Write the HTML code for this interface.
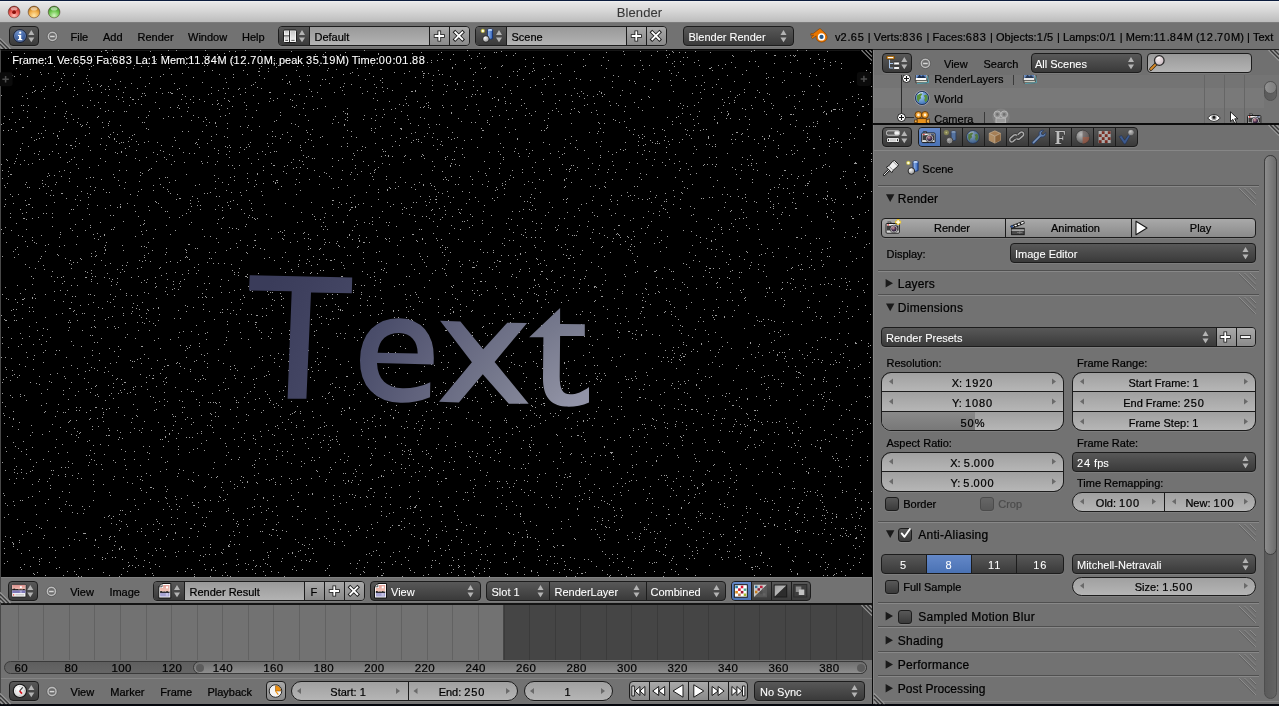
<!DOCTYPE html>
<html><head><meta charset="utf-8"><title>Blender</title>
<style>
html,body{margin:0;padding:0}
body{width:1279px;height:706px;position:relative;overflow:hidden;background:#727272;font-family:"Liberation Sans",sans-serif;font-size:11px;color:#000;-webkit-font-smoothing:antialiased}
.a{position:absolute}
.t{position:absolute;white-space:nowrap;line-height:14px;height:14px;-webkit-text-stroke:.22px}
.tw{color:#fff}
.w{position:absolute;box-sizing:border-box;border:1px solid #1c1c1c;border-radius:4px;overflow:hidden;box-shadow:0 1px 0 rgba(255,255,255,.09)}
.w>*{position:absolute}
.dk{background:linear-gradient(#585858,#3a3a3a)}
.bt{background:linear-gradient(#a9a9a9,#8a8a8a)}
.nm{background:linear-gradient(#a0a0a0,#b5b5b5);border-radius:10px}
.tx{background:linear-gradient(#999,#b3b3b3)}
.sel{background:linear-gradient(#6488c8,#4a72b4)}
.dv{top:0;bottom:0;width:1px;background:#1c1c1c}
svg{position:absolute;overflow:visible}
.d{letter-spacing:.9px}
#root{position:absolute;left:0;top:0;width:1279px;height:706px;will-change:transform}
.tw{-webkit-text-stroke:.08px}

</style></head>
<body>
<div id="root">
<div class="a" style="left:0px;top:0px;width:1279px;height:1px;background:#0b1c3d;"></div>
<div class="a" style="left:0px;top:1px;width:1279px;height:21px;background:linear-gradient(#f2f2f2,#e6e6e6 8%,#d6d6d6 48%,#bcbcbc);"></div>
<div class="a" style="left:0px;top:22px;width:1279px;height:1px;background:#7c7c7c;"></div>
<svg class="a" style="left:0px;top:0px" width="70" height="23" viewBox="0 0 70 23"><defs><radialGradient id="tlr" cx="50%" cy="80%" r="75%"><stop offset="0" stop-color="#ffc4bc"/><stop offset="0.55" stop-color="#ea5a52"/><stop offset="1" stop-color="#a02820"/></radialGradient><radialGradient id="tlo" cx="50%" cy="80%" r="75%"><stop offset="0" stop-color="#ffe6a8"/><stop offset="0.55" stop-color="#f0ac48"/><stop offset="1" stop-color="#a86a18"/></radialGradient><radialGradient id="tlg" cx="50%" cy="80%" r="75%"><stop offset="0" stop-color="#d4f6c0"/><stop offset="0.55" stop-color="#70c850"/><stop offset="1" stop-color="#3a8a24"/></radialGradient></defs><circle cx="14.1" cy="12" r="5.9" fill="url(#tlr)" stroke="rgba(60,30,20,.55)" stroke-width=".8"/><ellipse cx="14.1" cy="8.7" rx="3.3" ry="1.8" fill="rgba(255,255,255,.5)"/><circle cx="34" cy="12" r="5.9" fill="url(#tlo)" stroke="rgba(60,30,20,.55)" stroke-width=".8"/><ellipse cx="34" cy="8.7" rx="3.3" ry="1.8" fill="rgba(255,255,255,.5)"/><circle cx="54.1" cy="12" r="5.9" fill="url(#tlg)" stroke="rgba(60,30,20,.55)" stroke-width=".8"/><ellipse cx="54.1" cy="8.7" rx="3.3" ry="1.8" fill="rgba(255,255,255,.5)"/><circle cx="14.1" cy="12.2" r="1.9" fill="#8c0f0a"/></svg>
<div class="t " style="left:589.5px;top:4.5px;width:100px;text-align:center;font-size:13px;letter-spacing:.1px;color:#383838;line-height:16px;height:16px;-webkit-text-stroke:.1px">Blender</div><div class="a" style="left:0px;top:23px;width:1279px;height:26px;background:#727272;"></div>
<div class="a" style="left:0px;top:49px;width:1279px;height:1px;background:#1e1e1e;"></div>
<svg class="a" style="left:0px;top:37px" width="12" height="12" viewBox="0 0 12 12"><path d="M0 1.5L10.5 12M0 5.5L6.5 12M0 9.5L2.5 12" stroke="#9a9a9a" stroke-width="1.2"/><path d="M0 3.2L8.8 12M0 7.2L4.8 12" stroke="#3a3a3a" stroke-width="1.2"/></svg>
<div class="w dk" style="left:9px;top:26px;width:30px;height:20px;"></div><svg class="a" style="left:13px;top:29px" width="14" height="14" viewBox="0 0 14 14"><defs><radialGradient id="ig" cx="40%" cy="30%" r="75%"><stop offset="0" stop-color="#6f93cf"/><stop offset="1" stop-color="#1e3f80"/></radialGradient></defs><circle cx="7" cy="7" r="6.3" fill="url(#ig)" stroke="#101c38" stroke-width="1"/><circle cx="7" cy="7" r="5.6" fill="none" stroke="rgba(255,255,255,.35)" stroke-width=".6"/><rect x="6.1" y="2.6" width="2.2" height="2.1" rx=".9" fill="#fff"/><path d="M5 5.9H8.2V10H9.3V11.2H4.9V10H6V7.1H5Z" fill="#fff"/></svg><svg class="a" style="left:28px;top:30px" width="7" height="14" viewBox="0 0 7 14"><g transform="translate(0.3,0.1)"><path d="M3 0L6 4.8H0Z" fill="#b4b4b4"/><path d="M0 7.3H6L3 12.2Z" fill="#b4b4b4"/></g></svg>
<svg class="a" style="left:46px;top:30px" width="12" height="12" viewBox="0 0 12 12"><g transform="translate(0.9,0.9)"><circle cx="5.5" cy="5.5" r="4.1" fill="#6c6c6c" stroke="#bdbdbd" stroke-width="1.6"/><circle cx="5.5" cy="5.5" r="5.2" fill="none" stroke="rgba(50,50,50,.5)" stroke-width=".6"/><path d="M3.2 5.6H7.8" stroke="#d6d6d6" stroke-width="1.5"/></g></svg>
<div class="t " style="left:70.5px;top:30px;">File</div><div class="t " style="left:103px;top:30px;">Add</div><div class="t " style="left:137.5px;top:30px;">Render</div><div class="t " style="left:188px;top:30px;">Window</div><div class="t " style="left:242px;top:30px;">Help</div>
<div class="w " style="left:278px;top:26px;width:192px;height:20px;"><div class="dk" style="left:0;top:0;width:30px;height:18px"></div><div class="dv" style="left:30px"></div><div class="tx" style="left:31px;top:0;width:119px;height:18px"></div><div class="dv" style="left:150px"></div><div class="bt" style="left:151px;top:0;width:19px;height:18px"></div><div class="dv" style="left:170px"></div><div class="bt" style="left:171px;top:0;width:20px;height:18px"></div></div><svg class="a" style="left:283px;top:29px" width="15" height="15" viewBox="0 0 15 15"><g transform="translate(0,0.5)"><defs><linearGradient id="scg" x1="0" y1="0" x2="0" y2="1"><stop offset="0" stop-color="#c6c6c6"/><stop offset="1" stop-color="#f2f2f2"/></linearGradient></defs><rect x=".5" y=".5" width="13" height="12.5" rx="1.2" fill="#fff" stroke="#1c1c1c" stroke-width="1"/><rect x="1.6" y="1.6" width="4" height="4" fill="url(#scg)"/><rect x="1.6" y="7.3" width="4" height="4.6" fill="url(#scg)"/><rect x="7.4" y="1.6" width="5" height="10.3" fill="url(#scg)"/><path d="M6.5 .8V12.8M1 6.4H6.2" stroke="#2a2a2a" stroke-width="1"/><path d="M2.3 10.9H5M8.3 10.9H11.6" stroke="#333" stroke-width=".8"/></g></svg><svg class="a" style="left:299px;top:30px" width="7" height="14" viewBox="0 0 7 14"><g transform="translate(0,0.1)"><path d="M3 0L6 4.8H0Z" fill="#b4b4b4"/><path d="M0 7.3H6L3 12.2Z" fill="#b4b4b4"/></g></svg><div class="t " style="left:314.5px;top:30px;">Default</div><svg class="a" style="left:432px;top:29px" width="14" height="14" viewBox="0 0 14 14"><g transform="translate(0.8,0.5)"><path d="M6.5 1V12M1 6.5H12" stroke="#1a1a1a" stroke-width="3.6" stroke-linecap="butt"/><path d="M6.5 1.8V11.2M1.8 6.5H11.2" stroke="#fff" stroke-width="1.9"/></g></svg><svg class="a" style="left:452px;top:29px" width="14" height="14" viewBox="0 0 14 14"><g transform="translate(0.3,0.3)"><path d="M1.6 1.6L11.4 11.4M11.4 1.6L1.6 11.4" stroke="#1a1a1a" stroke-width="3.6"/><path d="M2.3 2.3L10.7 10.7M10.7 2.3L2.3 10.7" stroke="#fff" stroke-width="1.9"/></g></svg>
<div class="w " style="left:475px;top:26px;width:192px;height:20px;"><div class="dk" style="left:0;top:0;width:30px;height:18px"></div><div class="dv" style="left:30px"></div><div class="tx" style="left:31px;top:0;width:119px;height:18px"></div><div class="dv" style="left:150px"></div><div class="bt" style="left:151px;top:0;width:19px;height:18px"></div><div class="dv" style="left:170px"></div><div class="bt" style="left:171px;top:0;width:20px;height:18px"></div></div><svg class="a" style="left:480px;top:28px" width="15" height="15" viewBox="0 0 15 15"><defs><radialGradient id="sng" cx="35%" cy="30%" r="80%"><stop offset="0" stop-color="#fff"/><stop offset="1" stop-color="#8a8a8a"/></radialGradient><linearGradient id="cyg" x1="0" y1="0" x2="1" y2="0"><stop offset="0" stop-color="#9fc0f0"/><stop offset="1" stop-color="#2d5fb8"/></linearGradient><radialGradient id="lg" cx="50%" cy="50%" r="50%"><stop offset="0" stop-color="#fffde0"/><stop offset=".45" stop-color="#e8e06a"/><stop offset="1" stop-color="rgba(200,190,40,0)"/></radialGradient></defs><path d="M7.6 1.6Q10.2 .2 12.6 1.6V10.6Q10.2 12 7.6 10.6Z" fill="url(#cyg)" stroke="#14306e" stroke-width=".9"/><ellipse cx="10.1" cy="1.9" rx="2.3" ry=".9" fill="#c4daf8"/><circle cx="5.9" cy="11" r="3.3" fill="url(#sng)" stroke="#1e1e1e" stroke-width=".9"/><circle cx="2.8" cy="2.9" r="2.7" fill="url(#lg)"/><rect x="2" y="2.1" width="1.7" height="1.7" fill="#fffff0"/></svg><svg class="a" style="left:496px;top:30px" width="7" height="14" viewBox="0 0 7 14"><g transform="translate(0,0.1)"><path d="M3 0L6 4.8H0Z" fill="#b4b4b4"/><path d="M0 7.3H6L3 12.2Z" fill="#b4b4b4"/></g></svg><div class="t " style="left:511.5px;top:30px;">Scene</div><svg class="a" style="left:629px;top:29px" width="14" height="14" viewBox="0 0 14 14"><g transform="translate(0.8,0.5)"><path d="M6.5 1V12M1 6.5H12" stroke="#1a1a1a" stroke-width="3.6" stroke-linecap="butt"/><path d="M6.5 1.8V11.2M1.8 6.5H11.2" stroke="#fff" stroke-width="1.9"/></g></svg><svg class="a" style="left:649px;top:29px" width="14" height="14" viewBox="0 0 14 14"><g transform="translate(0.3,0.3)"><path d="M1.6 1.6L11.4 11.4M11.4 1.6L1.6 11.4" stroke="#1a1a1a" stroke-width="3.6"/><path d="M2.3 2.3L10.7 10.7M10.7 2.3L2.3 10.7" stroke="#fff" stroke-width="1.9"/></g></svg>
<div class="w dk" style="left:683px;top:26px;width:111px;height:20px;"></div><div class="t tw" style="left:688.5px;top:30.0px;">Blender Render</div><svg class="a" style="left:780px;top:30px" width="7" height="14" viewBox="0 0 7 14"><g transform="translate(0.5,0.1)"><path d="M3 0L6 4.8H0Z" fill="#b4b4b4"/><path d="M0 7.3H6L3 12.2Z" fill="#b4b4b4"/></g></svg>
<svg class="a" style="left:810px;top:28px" width="18" height="15" viewBox="0 0 18 15"><path d="M9.2 .9L3.2 5.6H.9L.7 7.2H3.7L1.1 9.3L2.5 10.6L6.2 7.9Q5.4 13.4 11.6 14.2Q17 13.6 17.2 8.9Q17.1 6.3 13.9 3.9L10.2 .7Z" fill="#ea7600" stroke="#7a3c00" stroke-width=".6"/><circle cx="11.5" cy="8.9" r="3.6" fill="#fff"/><circle cx="11.5" cy="8.9" r="2.1" fill="#265787"/></svg>
<div class="t " style="left:835px;top:30px;letter-spacing:.05px">v<span class="d">2</span>.<span class="d">65</span> | Verts:<span class="d">836</span> | Faces:<span class="d">683</span> | Objects:<span class="d">1</span>/<span class="d">5</span> | Lamps:<span class="d">0</span>/<span class="d">1</span> | Mem:<span class="d">11</span>.<span class="d">84</span>M (<span class="d">12</span>.<span class="d">70</span>M) | Text</div><div class="a" style="left:0px;top:50px;width:1px;height:654px;background:#484848;"></div>
<div class="a" style="left:1px;top:49px;width:871px;height:528px;background:#000;"></div><div class="a" style="left:1px;top:50px;width:859px;height:1px;background:#161616;"></div>
<svg class="a" style="left:1px;top:50px" width="871" height="527" viewBox="0 0 871 527"><path d="M57 0.5h1m46 0h1m0 0h1m5 0h1m55 0h1m7 0h1m28 0h1m39 0h1m14 0h1m103 0h1m102 0h1m198 0h1m87 0h1m42 0h1m8 0h1M100 1.5h1m48 0h1m78 0h1m5 0h1m55 0h1m209 0h1m121 0h1m16 0h1m16 0h1m14 0h1m22 0h1m55 0h1m75 0h1M10 2.5h1m95 0h1m217 0h1m19 0h1m75 0h1m19 0h1m52 0h1m1 0h1m77 0h1m31 0h1m66 0h1m5 0h1m5 0h1m24 0h1M23 3.5h1m199 0h1m153 0h1m33 0h1m66 0h1m35 0h1m250 0h1M160 4.5h1m45 0h1m9 0h1m97 0h1m7 0h1m16 0h1m37 0h1m59 0h1m14 0h1m135 0h1m34 0h1m44 0h1m148 0h1M335 5.5h1m3 0h1m128 0h1m36 0h1m6 0h1m53 0h1m83 0h1m14 0h1m65 0h1m41 0h1m0 0h1m14 0h1m2 0h1m1 0h1M75 6.5h1m17 0h1m17 0h1m52 0h1m3 0h1m25 0h1m0 0h1m6 0h1m5 0h1m35 0h1m76 0h1m0 0h1m13 0h1m139 0h1m6 0h1m248 0h1m51 0h1m8 0h1M143 7.5h1m40 0h1m84 0h1m55 0h1m206 0h1m69 0h1m63 0h1m15 0h1m3 0h1M7 8.5h1m94 0h1m84 0h1m1 0h1m16 0h1m9 0h1m14 0h1m41 0h1m196 0h1m71 0h1m266 0h1M13 9.5h1m14 0h1m98 0h1m17 0h1m9 0h1m104 0h1m139 0h1m40 0h1m7 0h1m74 0h1m57 0h1m235 0h1m4 0h1M84 10.5h1m30 0h1m36 0h1m54 0h1m22 0h1m42 0h1m10 0h1m145 0h1m5 0h1m26 0h1m143 0h1m31 0h1m57 0h1m98 0h1M46 11.5h1m107 0h1m105 0h1m79 0h1m47 0h1m284 0h1m5 0h1m68 0h1m5 0h1m68 0h1m10 0h1M34 12.5h1m50 0h1m33 0h1m110 0h1m1 0h1m110 0h1m60 0h1m21 0h1m3 0h1m234 0h1m27 0h1m36 0h1m58 0h1m39 0h1M32 13.5h1m29 0h1m58 0h1m19 0h1m0 0h1m118 0h1m13 0h1m12 0h1m8 0h1m103 0h1m77 0h1m52 0h1m138 0h1m101 0h1m39 0h1m26 0h1m28 0h1M21 14.5h1m59 0h1m102 0h1m269 0h1m93 0h1m11 0h1m121 0h1m41 0h1M42 15.5h1m49 0h1m17 0h1m22 0h1m69 0h1m2 0h1m37 0h1m32 0h1m24 0h1m15 0h1m52 0h1m129 0h1m41 0h1m12 0h1m27 0h1m15 0h1m19 0h1m12 0h1m7 0h1m6 0h1m49 0h1m18 0h1m111 0h1M53 16.5h1m24 0h1m11 0h1m49 0h1m6 0h1m112 0h1m35 0h1m10 0h1m56 0h1m135 0h1m23 0h1m57 0h1m90 0h1m83 0h1M125 17.5h1m61 0h1m87 0h1m175 0h1m32 0h1m225 0h1m23 0h1M15 18.5h1m116 0h1m35 0h1m89 0h1m8 0h1m59 0h1m28 0h1m94 0h1m17 0h1m10 0h1m2 0h1m48 0h1m72 0h1m102 0h1m0 0h1m11 0h1m100 0h1m17 0h1M29 19.5h1m58 0h1m246 0h1m43 0h1m0 0h1m137 0h1m123 0h1M211 20.5h1m30 0h1m52 0h1m30 0h1m110 0h1m95 0h1m134 0h1m42 0h1m33 0h1m119 0h1M116 21.5h1m86 0h1m53 0h1m0 0h1m8 0h1m140 0h1m12 0h1m90 0h1m3 0h1m14 0h1m18 0h1m22 0h1m84 0h1m123 0h1M39 22.5h1m16 0h1m294 0h1m41 0h1m80 0h1m163 0h1m38 0h1m112 0h1m71 0h1m6 0h1M47 23.5h1m14 0h1m10 0h1m107 0h1m167 0h1m18 0h1m34 0h1m18 0h1m0 0h1m3 0h1m100 0h1m30 0h1m110 0h1m94 0h1m33 0h1m9 0h1M19 24.5h1m20 0h1m121 0h1m7 0h1m47 0h1m13 0h1m13 0h1m95 0h1m95 0h1m2 0h1m30 0h1m268 0h1M11 25.5h1m51 0h1m8 0h1m13 0h1m171 0h1m26 0h1m20 0h1m1 0h1m48 0h1m64 0h1m9 0h1m83 0h1m95 0h1m62 0h1m25 0h1m24 0h1m88 0h1M13 26.5h1m12 0h1m132 0h1m138 0h1m73 0h1m76 0h1m39 0h1m18 0h1m38 0h1m69 0h1m76 0h1m113 0h1M139 27.5h1m10 0h1m41 0h1m39 0h1m98 0h1m82 0h1m7 0h1m73 0h1m106 0h1m163 0h1m4 0h1M60 28.5h1m24 0h1m138 0h1m38 0h1m117 0h1m161 0h1m8 0h1m22 0h1m106 0h1m82 0h1M109 29.5h1m171 0h1m39 0h1m2 0h1m39 0h1m157 0h1m18 0h1m37 0h1m71 0h1m65 0h1m144 0h1M299 30.5h1m79 0h1m51 0h1m40 0h1m95 0h1m20 0h1m38 0h1m40 0h1m14 0h1m98 0h1M61 31.5h1m25 0h1m31 0h1m168 0h1m18 0h1m146 0h1m8 0h1m147 0h1m21 0h1m23 0h1m75 0h1m88 0h1m29 0h1M2 32.5h1m50 0h1m147 0h1m23 0h1m28 0h1m33 0h1m92 0h1m321 0h1m44 0h1m32 0h1m67 0h1M82 33.5h1m47 0h1m17 0h1m24 0h1m112 0h1m41 0h1m14 0h1m56 0h1m18 0h1m36 0h1m177 0h1M66 34.5h1m21 0h1m7 0h1m17 0h1m137 0h1m36 0h1m60 0h1m22 0h1m69 0h1m12 0h1m47 0h1m39 0h1m8 0h1m161 0h1m49 0h1M52 35.5h1m47 0h1m84 0h1m64 0h1m68 0h1m111 0h1m14 0h1m87 0h1m135 0h1m24 0h1m4 0h1m109 0h1m6 0h1M32 36.5h1m11 0h1m54 0h1m7 0h1m36 0h1m197 0h1m129 0h1m7 0h1m35 0h1m126 0h1m174 0h1m51 0h1M59 37.5h1m13 0h1m16 0h1m33 0h1m85 0h1m45 0h1m82 0h1m19 0h1m15 0h1m5 0h1m119 0h1m27 0h1m81 0h1m99 0h1M136 38.5h1m22 0h1m18 0h1m43 0h1m4 0h1m10 0h1m5 0h1m15 0h1m125 0h1m186 0h1m146 0h1M42 39.5h1m15 0h1m45 0h1m3 0h1m8 0h1m58 0h1m60 0h1m70 0h1m145 0h1m6 0h1m187 0h1m53 0h1m39 0h1M34 40.5h1m20 0h1m17 0h1m13 0h1m3 0h1m125 0h1m123 0h1m49 0h1m22 0h1m16 0h1m44 0h1m32 0h1m111 0h1m134 0h1M33 41.5h1m6 0h1m269 0h1m55 0h1m15 0h1m27 0h1m0 0h1m2 0h1m30 0h1m134 0h1m17 0h1m73 0h1m56 0h1m71 0h1m1 0h1m24 0h1M31 42.5h1m68 0h1m21 0h1m32 0h1m11 0h1m1 0h1m74 0h1m23 0h1m0 0h1m46 0h1m16 0h1m153 0h1m52 0h1m59 0h1m98 0h1m43 0h1m14 0h1M25 43.5h1m115 0h1m1 0h1m17 0h1m8 0h1m0 0h1m38 0h1m13 0h1m58 0h1m77 0h1m12 0h1m135 0h1m65 0h1m5 0h1m17 0h1m28 0h1m61 0h1m74 0h1m51 0h1M76 44.5h1m104 0h1m25 0h1m31 0h1m53 0h1m4 0h1m44 0h1m98 0h1m28 0h1m2 0h1m4 0h1m61 0h1m12 0h1m9 0h1m31 0h1m6 0h1m108 0h1m25 0h1m29 0h1m33 0h1m54 0h1M0 45.5h1m106 0h1m36 0h1m107 0h1m317 0h1m15 0h1m32 0h1m116 0h1m51 0h1m4 0h1M21 46.5h1m50 0h1m42 0h1m24 0h1m43 0h1m7 0h1m39 0h1m72 0h1m5 0h1m93 0h1m18 0h1m45 0h1m107 0h1m13 0h1m8 0h1m45 0h1m203 0h1m18 0h1M121 47.5h1m7 0h1m335 0h1m27 0h1m9 0h1m144 0h1m78 0h1m6 0h1m19 0h1m30 0h1M26 48.5h1m16 0h1m179 0h1m45 0h1m6 0h1m43 0h1m51 0h1m118 0h1m91 0h1m116 0h1m156 0h1M117 49.5h1m13 0h1m0 0h1m4 0h1m42 0h1m8 0h1m8 0h1m90 0h1m114 0h1m92 0h1m22 0h1m119 0h1m80 0h1m40 0h1m53 0h1m28 0h1m14 0h1M89 50.5h1m126 0h1m10 0h1m44 0h1m18 0h1m84 0h1m120 0h1m60 0h1m109 0h1m64 0h1M61 51.5h1m60 0h1m80 0h1m24 0h1m39 0h1m119 0h1m27 0h1m87 0h1m37 0h1m28 0h1m36 0h1m154 0h1m34 0h1m26 0h1M97 52.5h1m6 0h1m49 0h1m37 0h1m50 0h1m183 0h1m205 0h1m63 0h1m25 0h1m9 0h1m119 0h1M64 53.5h1m69 0h1m50 0h1m31 0h1m39 0h1m45 0h1m101 0h1m19 0h1m78 0h1m4 0h1m13 0h1m30 0h1m38 0h1m21 0h1m63 0h1m48 0h1m41 0h1m65 0h1M140 54.5h1m70 0h1m4 0h1m181 0h1m76 0h1m110 0h1m280 0h1M20 55.5h1m1 0h1m4 0h1m53 0h1m11 0h1m34 0h1m48 0h1m42 0h1m24 0h1m49 0h1m106 0h1m4 0h1m19 0h1m13 0h1m8 0h1m15 0h1m53 0h1m62 0h1m25 0h1m7 0h1m64 0h1m10 0h1m28 0h1m27 0h1m21 0h1M54 56.5h1m176 0h1m59 0h1m32 0h1m98 0h1m70 0h1m129 0h1m52 0h1m8 0h1m106 0h1m26 0h1m40 0h1m0 0h1M11 57.5h1m23 0h1m50 0h1m82 0h1m6 0h1m10 0h1m105 0h1m125 0h1m2 0h1m4 0h1m14 0h1m194 0h1m14 0h1M99 58.5h1m58 0h1m19 0h1m47 0h1m75 0h1m13 0h1m29 0h1m47 0h1m34 0h1m95 0h1m29 0h1m17 0h1m107 0h1m35 0h1m23 0h1m9 0h1m19 0h1m22 0h1m46 0h1M218 59.5h1m26 0h1m66 0h1m61 0h1m7 0h1m7 0h1m73 0h1m105 0h1m173 0h1m56 0h1m10 0h1m19 0h1m0 0h1m0 0h1m3 0h1M22 60.5h1m84 0h1m147 0h1m221 0h1m11 0h1m15 0h1m9 0h1m35 0h1m43 0h1m45 0h1m188 0h1m10 0h1M26 61.5h1m17 0h1m20 0h1m38 0h1m7 0h1m10 0h1m1 0h1m22 0h1m37 0h1m155 0h1m57 0h1m133 0h1m22 0h1m19 0h1m45 0h1m74 0h1m27 0h1m36 0h1m59 0h1m6 0h1m27 0h1M11 62.5h1m267 0h1m170 0h1m127 0h1m11 0h1m129 0h1m101 0h1m45 0h1M53 63.5h1m10 0h1m163 0h1m115 0h1m1 0h1m103 0h1m77 0h1m18 0h1m21 0h1m111 0h1m45 0h1m97 0h1M70 64.5h1m227 0h1m47 0h1m36 0h1m94 0h1m81 0h1m35 0h1m6 0h1m85 0h1m37 0h1m37 0h1m12 0h1m10 0h1m0 0h1m1 0h1m32 0h1M147 65.5h1m44 0h1m31 0h1m54 0h1m24 0h1m58 0h1m11 0h1m30 0h1m31 0h1m59 0h1m25 0h1m5 0h1m195 0h1m129 0h1M3 66.5h1m59 0h1m33 0h1m69 0h1m12 0h1m38 0h1m24 0h1m89 0h1m156 0h1m185 0h1m18 0h1m16 0h1m30 0h1m35 0h1M26 67.5h1m16 0h1m52 0h1m40 0h1m7 0h1m26 0h1m24 0h1m6 0h1m46 0h1m94 0h1m34 0h1m37 0h1m246 0h1m8 0h1M65 68.5h1m11 0h1m84 0h1m207 0h1m23 0h1m28 0h1m33 0h1m53 0h1m35 0h1m81 0h1m95 0h1m3 0h1m50 0h1M8 69.5h1m9 0h1m53 0h1m132 0h1m126 0h1m11 0h1m17 0h1m44 0h1m99 0h1m104 0h1m79 0h1m20 0h1m24 0h1m9 0h1m30 0h1M190 70.5h1m84 0h1m31 0h1m38 0h1m27 0h1m111 0h1m56 0h1m70 0h1m180 0h1M29 71.5h1m78 0h1m93 0h1m70 0h1m186 0h1m162 0h1m47 0h1m144 0h1m11 0h1M14 72.5h1m51 0h1m9 0h1m9 0h1m14 0h1m39 0h1m1 0h1m64 0h1m5 0h1m122 0h1m55 0h1m76 0h1m3 0h1m11 0h1m110 0h1m20 0h1m97 0h1m95 0h1M2 73.5h1m104 0h1m106 0h1m11 0h1m63 0h1m40 0h1m77 0h1m118 0h1m41 0h1m27 0h1m4 0h1m75 0h1m17 0h1m18 0h1m99 0h1M0 74.5h1m78 0h1m5 0h1m208 0h1m48 0h1m83 0h1m7 0h1m2 0h1m49 0h1m182 0h1m76 0h1m40 0h1m72 0h1m0 0h1M81 75.5h1m25 0h1m11 0h1m85 0h1m41 0h1m95 0h1m73 0h1m128 0h1m146 0h1M42 76.5h1m37 0h1m134 0h1m23 0h1m18 0h1m38 0h1m81 0h1m263 0h1m150 0h1m10 0h1m2 0h1m3 0h1m1 0h1M21 77.5h1m0 0h1m65 0h1m13 0h1m143 0h1m181 0h1m17 0h1m57 0h1m41 0h1m78 0h1m228 0h1M145 78.5h1m80 0h1m143 0h1m3 0h1m24 0h1m0 0h1m79 0h1m64 0h1m53 0h1m52 0h1m117 0h1m66 0h1M10 79.5h1m51 0h1m84 0h1m163 0h1m88 0h1m113 0h1m118 0h1m27 0h1m22 0h1m17 0h1m2 0h1m40 0h1m113 0h1M2 80.5h1m4 0h1m36 0h1m205 0h1m54 0h1m40 0h1m23 0h1m110 0h1m0 0h1m57 0h1m2 0h1m84 0h1m34 0h1m22 0h1m5 0h1m6 0h1m102 0h1M15 81.5h1m42 0h1m62 0h1m59 0h1m5 0h1m13 0h1m69 0h1m78 0h1m246 0h1m178 0h1M112 82.5h1m173 0h1m19 0h1m66 0h1m40 0h1m36 0h1m56 0h1m79 0h1m13 0h1m132 0h1m0 0h1M37 83.5h1m2 0h1m11 0h1m35 0h1m321 0h1m15 0h1m5 0h1m163 0h1m56 0h1m87 0h1m40 0h1m23 0h1m42 0h1M109 84.5h1m6 0h1m16 0h1m81 0h1m25 0h1m24 0h1m14 0h1m27 0h1m187 0h1m134 0h1m8 0h1m43 0h1m45 0h1m8 0h1m38 0h1M56 85.5h1m27 0h1m46 0h1m258 0h1m246 0h1m50 0h1m23 0h1m55 0h1M56 86.5h1m50 0h1m102 0h1m12 0h1m47 0h1m2 0h1m15 0h1m30 0h1m28 0h1m72 0h1m146 0h1m72 0h1m20 0h1m42 0h1m39 0h1m13 0h1m6 0h1m49 0h1M30 87.5h1m11 0h1m65 0h1m19 0h1m44 0h1m52 0h1m92 0h1m22 0h1m12 0h1m49 0h1m25 0h1m15 0h1m8 0h1m23 0h1m157 0h1m68 0h1m98 0h1M38 88.5h1m18 0h1m17 0h1m24 0h1m12 0h1m165 0h1m101 0h1m17 0h1m53 0h1m62 0h1m124 0h1m48 0h1m16 0h1m55 0h1m3 0h1m64 0h1m20 0h1M35 89.5h1m77 0h1m16 0h1m66 0h1m109 0h1m107 0h1m1 0h1m18 0h1m13 0h1m19 0h1m45 0h1m47 0h1m106 0h1m9 0h1m48 0h1m3 0h1m18 0h1m9 0h1m44 0h1m10 0h1m9 0h1m18 0h1M33 90.5h1m140 0h1m35 0h1m78 0h1m20 0h1m101 0h1m50 0h1m111 0h1m73 0h1m13 0h1m108 0h1M74 91.5h1m40 0h1m11 0h1m7 0h1m11 0h1m246 0h1m22 0h1m22 0h1m159 0h1m36 0h1m18 0h1m10 0h1m73 0h1m63 0h1m30 0h1M120 92.5h1m1 0h1m20 0h1m12 0h1m38 0h1m53 0h1m37 0h1m16 0h1m105 0h1m9 0h1m107 0h1m13 0h1m52 0h1m28 0h1m26 0h1m26 0h1m155 0h1m5 0h1M21 93.5h1m56 0h1m39 0h1m75 0h1m11 0h1m59 0h1m4 0h1m74 0h1m27 0h1m124 0h1m69 0h1m84 0h1m1 0h1m1 0h1m72 0h1m25 0h1m70 0h1M2 94.5h1m52 0h1m9 0h1m33 0h1m37 0h1m58 0h1m50 0h1m78 0h1m112 0h1m108 0h1m95 0h1m23 0h1m36 0h1m2 0h1m5 0h1M69 95.5h1m0 0h1m34 0h1m54 0h1m67 0h1m70 0h1m98 0h1m33 0h1m8 0h1m195 0h1m4 0h1m134 0h1m15 0h1M27 96.5h1m46 0h1m12 0h1m40 0h1m42 0h1m52 0h1m23 0h1m18 0h1m44 0h1m27 0h1m5 0h1m14 0h1m29 0h1m207 0h1m93 0h1m17 0h1m2 0h1m49 0h1m63 0h1M198 97.5h1m27 0h1m2 0h1m9 0h1m5 0h1m53 0h1m64 0h1m90 0h1m20 0h1m25 0h1m60 0h1m10 0h1m90 0h1m174 0h1M19 98.5h1m51 0h1m52 0h1m53 0h1m34 0h1m247 0h1m52 0h1m262 0h1m34 0h1m0 0h1M104 99.5h1m138 0h1m137 0h1m54 0h1m88 0h1m50 0h1m42 0h1m4 0h1m70 0h1M19 100.5h1m69 0h1m45 0h1m23 0h1m57 0h1m82 0h1m55 0h1m3 0h1m170 0h1m51 0h1m38 0h1m20 0h1m118 0h1m27 0h1m5 0h1m65 0h1M38 101.5h1m12 0h1m68 0h1m41 0h1m65 0h1m32 0h1m11 0h1m1 0h1m106 0h1m1 0h1m68 0h1m43 0h1m15 0h1m43 0h1m49 0h1m40 0h1M65 102.5h1m48 0h1m5 0h1m31 0h1m29 0h1m55 0h1m30 0h1m218 0h1m126 0h1m20 0h1m17 0h1m10 0h1M33 103.5h1m23 0h1m58 0h1m71 0h1m4 0h1m23 0h1m38 0h1m95 0h1m164 0h1m10 0h1m20 0h1m13 0h1m128 0h1m33 0h1m66 0h1m30 0h1m45 0h1M16 104.5h1m20 0h1m10 0h1m107 0h1m11 0h1m56 0h1m38 0h1m156 0h1m39 0h1m37 0h1m61 0h1m49 0h1m29 0h1m32 0h1m110 0h1m5 0h1M125 105.5h1m45 0h1m130 0h1m50 0h1m30 0h1m2 0h1m16 0h1m17 0h1m176 0h1m149 0h1m68 0h1m29 0h1M207 106.5h1m99 0h1m72 0h1m6 0h1m3 0h1m11 0h1m16 0h1m25 0h1m71 0h1m8 0h1m247 0h1M59 107.5h1m13 0h1m71 0h1m17 0h1m64 0h1m76 0h1m138 0h1m18 0h1m38 0h1m55 0h1m40 0h1m108 0h1m6 0h1m25 0h1m34 0h1M15 108.5h1m83 0h1m34 0h1m112 0h1m63 0h1m1 0h1m17 0h1m9 0h1m81 0h1m163 0h1m215 0h1M5 109.5h1m32 0h1m3 0h1m27 0h1m10 0h1m83 0h1m91 0h1m34 0h1m58 0h1m57 0h1m34 0h1m6 0h1m1 0h1m48 0h1m39 0h1m102 0h1m7 0h1m14 0h1m77 0h1m4 0h1m118 0h1M6 110.5h1m16 0h1m114 0h1m159 0h1m38 0h1M14 111.5h1m53 0h1m35 0h1m50 0h1m17 0h1m26 0h1m15 0h1m84 0h1m60 0h1m10 0h1m57 0h1m51 0h1m127 0h1m66 0h1m122 0h1m68 0h1M66 112.5h1m51 0h1m64 0h1m22 0h1m83 0h1m111 0h1m131 0h1m93 0h1m32 0h1m102 0h1m89 0h1M13 113.5h1m17 0h1m169 0h1m48 0h1m19 0h1m110 0h1m68 0h1m48 0h1m91 0h1m44 0h1m36 0h1m11 0h1m64 0h1m4 0h1m97 0h1m0 0h1m0 0h1M0 114.5h1m18 0h1m7 0h1m47 0h1m94 0h1m43 0h1m87 0h1m85 0h1m65 0h1m106 0h1m141 0h1m2 0h1m4 0h1m3 0h1m24 0h1m83 0h1M97 115.5h1m129 0h1m3 0h1m6 0h1m33 0h1m0 0h1m12 0h1m67 0h1m12 0h1m81 0h1m8 0h1m111 0h1m1 0h1m25 0h1m13 0h1m38 0h1m12 0h1m37 0h1m44 0h1m2 0h1m71 0h1M262 116.5h1m20 0h1m47 0h1m101 0h1m15 0h1m240 0h1m23 0h1m113 0h1M8 117.5h1m79 0h1m206 0h1m3 0h1m77 0h1m153 0h1m44 0h1m154 0h1m89 0h1m41 0h1M77 118.5h1m72 0h1m82 0h1m58 0h1m13 0h1m47 0h1m133 0h1m9 0h1m49 0h1m20 0h1m17 0h1m91 0h1m135 0h1M148 119.5h1m225 0h1m146 0h1m43 0h1m2 0h1m28 0h1m9 0h1m17 0h1m61 0h1m46 0h1m17 0h1M1 120.5h1m61 0h1m54 0h1m6 0h1m21 0h1m114 0h1m50 0h1m27 0h1m31 0h1m57 0h1m79 0h1m36 0h1m25 0h1m103 0h1m61 0h1m15 0h1m26 0h1m0 0h1m25 0h1M7 121.5h1m50 0h1m223 0h1m77 0h1m80 0h1m35 0h1m90 0h1m273 0h1m1 0h1M69 122.5h1m69 0h1m183 0h1m26 0h1m22 0h1m147 0h1m11 0h1m72 0h1m7 0h1m239 0h1M47 123.5h1m93 0h1m104 0h1m9 0h1m28 0h1m12 0h1m26 0h1m43 0h1m114 0h1m13 0h1m140 0h1m55 0h1m114 0h1M9 124.5h1m0 0h1m101 0h1m72 0h1m70 0h1m13 0h1m78 0h1m6 0h1m63 0h1m129 0h1m43 0h1m50 0h1m43 0h1m45 0h1m29 0h1m24 0h1M48 125.5h1m4 0h1m85 0h1m73 0h1m271 0h1m23 0h1m258 0h1m12 0h1m20 0h1m61 0h1M7 126.5h1m38 0h1m13 0h1m172 0h1m84 0h1m9 0h1m42 0h1m13 0h1m64 0h1m18 0h1m327 0h1m44 0h1M89 127.5h1m2 0h1m20 0h1m50 0h1m1 0h1m62 0h1m169 0h1m44 0h1m13 0h1m53 0h1m125 0h1m17 0h1m17 0h1m34 0h1m153 0h1M1 128.5h1m66 0h1m16 0h1m72 0h1m58 0h1m28 0h1m83 0h1m234 0h1m173 0h1m38 0h1m7 0h1m9 0h1m42 0h1M100 129.5h1m194 0h1m12 0h1m31 0h1m12 0h1m18 0h1m12 0h1m56 0h1m2 0h1m25 0h1m36 0h1m29 0h1m24 0h1m16 0h1m30 0h1m8 0h1m19 0h1m110 0h1M41 130.5h1m75 0h1m56 0h1m58 0h1m20 0h1m20 0h1m0 0h1m170 0h1m94 0h1m20 0h1m152 0h1m149 0h1M68 131.5h1m69 0h1m75 0h1m57 0h1m214 0h1m16 0h1m22 0h1m153 0h1m126 0h1M25 132.5h1m29 0h1m68 0h1m43 0h1m52 0h1m25 0h1m26 0h1m1 0h1m21 0h1m95 0h1m9 0h1m13 0h1m112 0h1m38 0h1m33 0h1m146 0h1m73 0h1m27 0h1M6 133.5h1m34 0h1m220 0h1m11 0h1m154 0h1m71 0h1m304 0h1m0 0h1M24 134.5h1m19 0h1m9 0h1m104 0h1m38 0h1m28 0h1m27 0h1m38 0h1m23 0h1m94 0h1m8 0h1m31 0h1m2 0h1m13 0h1m9 0h1m22 0h1m18 0h1m167 0h1m86 0h1m75 0h1M3 135.5h1m114 0h1m33 0h1m41 0h1m151 0h1m21 0h1m53 0h1m7 0h1m70 0h1m92 0h1m198 0h1m10 0h1m1 0h1m37 0h1M42 136.5h1m4 0h1m28 0h1m12 0h1m163 0h1m26 0h1m116 0h1m35 0h1m52 0h1m77 0h1m24 0h1m13 0h1m29 0h1m2 0h1m75 0h1M4 137.5h1m21 0h1m1 0h1m65 0h1m67 0h1m174 0h1m50 0h1m21 0h1m84 0h1m67 0h1m40 0h1m78 0h1m39 0h1m49 0h1m3 0h1M38 138.5h1m84 0h1m90 0h1m117 0h1m56 0h1m4 0h1m108 0h1m30 0h1m63 0h1m87 0h1m95 0h1m3 0h1m58 0h1M102 139.5h1m37 0h1m25 0h1m110 0h1m99 0h1m8 0h1m27 0h1m19 0h1m61 0h1m239 0h1m32 0h1M50 140.5h1m42 0h1m58 0h1m72 0h1m19 0h1m53 0h1m86 0h1m107 0h1m177 0h1M80 141.5h1m56 0h1m29 0h1m92 0h1m185 0h1m14 0h1m187 0h1m176 0h1m43 0h1M105 142.5h1m2 0h1m100 0h1m20 0h1m8 0h1m125 0h1m11 0h1m59 0h1m30 0h1m70 0h1m86 0h1m53 0h1m111 0h1M45 143.5h1m14 0h1m0 0h1m24 0h1m82 0h1m33 0h1m2 0h1m234 0h1m222 0h1m16 0h1m85 0h1m20 0h1m13 0h1m60 0h1M9 144.5h1m7 0h1m71 0h1m39 0h1m46 0h1m118 0h1m207 0h1m26 0h1m190 0h1m4 0h1m17 0h1m70 0h1M49 145.5h1m2 0h1m23 0h1m59 0h1m103 0h1m20 0h1m91 0h1m256 0h1m9 0h1m8 0h1m3 0h1m21 0h1m170 0h1M11 146.5h1m179 0h1m23 0h1m2 0h1m200 0h1m8 0h1m6 0h1m11 0h1m71 0h1m72 0h1m34 0h1m45 0h1m55 0h1m7 0h1m38 0h1m29 0h1m19 0h1m29 0h1m3 0h1M87 147.5h1m261 0h1m102 0h1m21 0h1m21 0h1m32 0h1m124 0h1m53 0h1m2 0h1m32 0h1m111 0h1M29 148.5h1m35 0h1m112 0h1m0 0h1m16 0h1m294 0h1m41 0h1m32 0h1m70 0h1m10 0h1m51 0h1m1 0h1m38 0h1m25 0h1m24 0h1m29 0h1m1 0h1m5 0h1m28 0h1M4 149.5h1m69 0h1m100 0h1m201 0h1m51 0h1m4 0h1m0 0h1m32 0h1m93 0h1m2 0h1m43 0h1m31 0h1m4 0h1m18 0h1m13 0h1m145 0h1m8 0h1M24 150.5h1m54 0h1m109 0h1m42 0h1m15 0h1m82 0h1m0 0h1m160 0h1m97 0h1m24 0h1m14 0h1m199 0h1M154 151.5h1m42 0h1m31 0h1m194 0h1m52 0h1m45 0h1m2 0h1m83 0h1m52 0h1m1 0h1m79 0h1m7 0h1m15 0h1m47 0h1M53 152.5h1m101 0h1m70 0h1m83 0h1m27 0h1m11 0h1m35 0h1m25 0h1m2 0h1m12 0h1m6 0h1m13 0h1m79 0h1m18 0h1m16 0h1m84 0h1m73 0h1m30 0h1m35 0h1m41 0h1M12 153.5h1m113 0h1m30 0h1m31 0h1m60 0h1m33 0h1m60 0h1m16 0h1m37 0h1m64 0h1m119 0h1m191 0h1m16 0h1M4 154.5h1m22 0h1m0 0h1m58 0h1m31 0h1m116 0h1m26 0h1m67 0h1m8 0h1m16 0h1m34 0h1m187 0h1m35 0h1m55 0h1m99 0h1m53 0h1m15 0h1m8 0h1M25 155.5h1m19 0h1m30 0h1m19 0h1m12 0h1m23 0h1m62 0h1m2 0h1m17 0h1m9 0h1m197 0h1m57 0h1m47 0h1m68 0h1m59 0h1M3 156.5h1m115 0h1m27 0h1m42 0h1m101 0h1m61 0h1m15 0h1m18 0h1m53 0h1m245 0h1m82 0h1M31 157.5h1m84 0h1m2 0h1m40 0h1m60 0h1m99 0h1m15 0h1m12 0h1m0 0h1m2 0h1m48 0h1m6 0h1m140 0h1m171 0h1m45 0h1m14 0h1M86 158.5h1m17 0h1m124 0h1m20 0h1m154 0h1m32 0h1m138 0h1m84 0h1m16 0h1m13 0h1m78 0h1m21 0h1m0 0h1M19 159.5h1m50 0h1m1 0h1m114 0h1m11 0h1m14 0h1m25 0h1m108 0h1m51 0h1m29 0h1m25 0h1m2 0h1m61 0h1m5 0h1m5 0h1m73 0h1m55 0h1m75 0h1M148 160.5h1m72 0h1m29 0h1m96 0h1m81 0h1m13 0h1m85 0h1m47 0h1m138 0h1m12 0h1m99 0h1m36 0h1M134 161.5h1m29 0h1m1 0h1m22 0h1m191 0h1m100 0h1m28 0h1m6 0h1m128 0h1m10 0h1m70 0h1m26 0h1m8 0h1M25 162.5h1m274 0h1m157 0h1m88 0h1m18 0h1m24 0h1m74 0h1m75 0h1m38 0h1m50 0h1m31 0h1M9 163.5h1m11 0h1m20 0h1m2 0h1m5 0h1m16 0h1m116 0h1m57 0h1m80 0h1m76 0h1m57 0h1m154 0h1m37 0h1m172 0h1M88 164.5h1m176 0h1m45 0h1m96 0h1m24 0h1m10 0h1m24 0h1m222 0h1m79 0h1m7 0h1m77 0h1M109 165.5h1m2 0h1m68 0h1m66 0h1m82 0h1m14 0h1m66 0h1m76 0h1m53 0h1m48 0h1m16 0h1m12 0h1m34 0h1m31 0h1m97 0h1m17 0h1M137 166.5h1m132 0h1m42 0h1m107 0h1m3 0h1m25 0h1m19 0h1m101 0h1m22 0h1m229 0h1m23 0h1M9 167.5h1m27 0h1m13 0h1m116 0h1m9 0h1m43 0h1m24 0h1m3 0h1m71 0h1m47 0h1m6 0h1m62 0h1m200 0h1m25 0h1m76 0h1m80 0h1M22 168.5h1m0 0h1m7 0h1m189 0h1m31 0h1m2 0h1m171 0h1m78 0h1m13 0h1m36 0h1m4 0h1m68 0h1m74 0h1m30 0h1m3 0h1m33 0h1m74 0h1m0 0h1M25 169.5h1m55 0h1m135 0h1m36 0h1m59 0h1m4 0h1m119 0h1m70 0h1m199 0h1m23 0h1m95 0h1M143 170.5h1m211 0h1m110 0h1m14 0h1m147 0h1M122 171.5h1m178 0h1m40 0h1m28 0h1m42 0h1m17 0h1m28 0h1m1 0h1m67 0h1m55 0h1m62 0h1m44 0h1m114 0h1m22 0h1M99 172.5h1m90 0h1m105 0h1m25 0h1m12 0h1m6 0h1m20 0h1m21 0h1m2 0h1M15 173.5h1m127 0h1m72 0h1m151 0h1m112 0h1m23 0h1m29 0h1m4 0h1m189 0h1m47 0h1M74 174.5h1m67 0h1m45 0h1m56 0h1m110 0h1m14 0h1m345 0h1m38 0h1M89 175.5h1m49 0h1m25 0h1m221 0h1m62 0h1m20 0h1m44 0h1m40 0h1m20 0h1m38 0h1m0 0h1m28 0h1m97 0h1M51 176.5h1m192 0h1m75 0h1m3 0h1m28 0h1m41 0h1m40 0h1m149 0h1m145 0h1M4 177.5h1m84 0h1m23 0h1m114 0h1m239 0h1m22 0h1m62 0h1m46 0h1m44 0h1m66 0h1m6 0h1m79 0h1m56 0h1M69 178.5h1m150 0h1m10 0h1m3 0h1m217 0h1m86 0h1m25 0h1m73 0h1m107 0h1m83 0h1M0 179.5h1m24 0h1m84 0h1m1 0h1m41 0h1m46 0h1m35 0h1m29 0h1m54 0h1m3 0h1m91 0h1m1 0h1m38 0h1m48 0h1m15 0h1m31 0h1m35 0h1m20 0h1m106 0h1m7 0h1m28 0h1m13 0h1m8 0h1M10 180.5h1m60 0h1m12 0h1m60 0h1m28 0h1m108 0h1m67 0h1m23 0h1m158 0h1m20 0h1m104 0h1m21 0h1M140 181.5h1m138 0h1m296 0h1m55 0h1m57 0h1m20 0h1m24 0h1m127 0h1M59 182.5h1m167 0h1m49 0h1m3 0h1m21 0h1m185 0h1m22 0h1m11 0h1m66 0h1m252 0h1M2 183.5h1m93 0h1m196 0h1m8 0h1m129 0h1m15 0h1m149 0h1m17 0h1m27 0h1m76 0h1m134 0h1M59 184.5h1m32 0h1m10 0h1m37 0h1m27 0h1m84 0h1m52 0h1m40 0h1m62 0h1m0 0h1m74 0h1m32 0h1m46 0h1m47 0h1m1 0h1M17 185.5h1m22 0h1m62 0h1m179 0h1m32 0h1m31 0h1m9 0h1m163 0h1m48 0h1m1 0h1m1 0h1m27 0h1m14 0h1m76 0h1m108 0h1M21 186.5h1m54 0h1m22 0h1m34 0h1m68 0h1m5 0h1m166 0h1m249 0h1m6 0h1m32 0h1m184 0h1M31 187.5h1m26 0h1m287 0h1m18 0h1m36 0h1m122 0h1m4 0h1m3 0h1m4 0h1m66 0h1m12 0h1m7 0h1m28 0h1m42 0h1m95 0h1m0 0h1m46 0h1m10 0h1M93 188.5h1m58 0h1m62 0h1m54 0h1m10 0h1m21 0h1m3 0h1m49 0h1m26 0h1m3 0h1m32 0h1m13 0h1m67 0h1m85 0h1m22 0h1m92 0h1m94 0h1m14 0h1m2 0h1M97 189.5h1m184 0h1m26 0h1m13 0h1m27 0h1m33 0h1m35 0h1m18 0h1m16 0h1m172 0h1m83 0h1m43 0h1M31 190.5h1m207 0h1m13 0h1m0 0h1m103 0h1m40 0h1m15 0h1m20 0h1m71 0h1m3 0h1m147 0h1m49 0h1m25 0h1M24 191.5h1m271 0h1m39 0h1m21 0h1m29 0h1m27 0h1m44 0h1m11 0h1m6 0h1m62 0h1m67 0h1m12 0h1m85 0h1m117 0h1M5 192.5h1m27 0h1m71 0h1m41 0h1m69 0h1m71 0h1m34 0h1m3 0h1m33 0h1m0 0h1m4 0h1m223 0h1m46 0h1m18 0h1m40 0h1M35 193.5h1m199 0h1m99 0h1m88 0h1m76 0h1m151 0h1m155 0h1m58 0h1M47 194.5h1m27 0h1m111 0h1m0 0h1m134 0h1m240 0h1m54 0h1m10 0h1m129 0h1m104 0h1M44 195.5h1m18 0h1m40 0h1m16 0h1m124 0h1m7 0h1m82 0h1m58 0h1m44 0h1m61 0h1m29 0h1m23 0h1m133 0h1M26 196.5h1m31 0h1m81 0h1m2 0h1m163 0h1m30 0h1m18 0h1m161 0h1m52 0h1m28 0h1m27 0h1m3 0h1m87 0h1m65 0h1M16 197.5h1m86 0h1m41 0h1m90 0h1m15 0h1m90 0h1m12 0h1m82 0h1m4 0h1m1 0h1m87 0h1m25 0h1m39 0h1m64 0h1m163 0h1m33 0h1M165 198.5h1m28 0h1m1 0h1m32 0h1m29 0h1m49 0h1m9 0h1m386 0h1m59 0h1m10 0h1m16 0h1m31 0h1M14 199.5h1m89 0h1m79 0h1m78 0h1m43 0h1m10 0h1m125 0h1m34 0h1m86 0h1m60 0h1m82 0h1m4 0h1m105 0h1M104 200.5h1m17 0h1m28 0h1m33 0h1m39 0h1m266 0h1m47 0h1m40 0h1m47 0h1M12 201.5h1m31 0h1m49 0h1m283 0h1m280 0h1m61 0h1m23 0h1m63 0h1m39 0h1M165 202.5h1m19 0h1m22 0h1m5 0h1m30 0h1m38 0h1m77 0h1m12 0h1m65 0h1m7 0h1m32 0h1m3 0h1m5 0h1m31 0h1m84 0h1m78 0h1m57 0h1m24 0h1m48 0h1M90 203.5h1m12 0h1m43 0h1m98 0h1m171 0h1m100 0h1m111 0h1m132 0h1m33 0h1M17 204.5h1m38 0h1m107 0h1m157 0h1m74 0h1m121 0h1m42 0h1m16 0h1m17 0h1m130 0h1m31 0h1M57 205.5h1m37 0h1m47 0h1m154 0h1m47 0h1m2 0h1m93 0h1m56 0h1m6 0h1m6 0h1m50 0h1m3 0h1m124 0h1m63 0h1M1 206.5h1m38 0h1m49 0h1m3 0h1m90 0h1m126 0h1m89 0h1m16 0h1m6 0h1m176 0h1m32 0h1m77 0h1m23 0h1m33 0h1m33 0h1m19 0h1m1 0h1M13 207.5h1m129 0h1m40 0h1m1 0h1m81 0h1m12 0h1m290 0h1m212 0h1m75 0h1M39 208.5h1m24 0h1m14 0h1m128 0h1m1 0h1m52 0h1m98 0h1m172 0h1m31 0h1m0 0h1m286 0h1M80 209.5h1m107 0h1m117 0h1m11 0h1m6 0h1m7 0h1m87 0h1m94 0h1m19 0h1m17 0h1m174 0h1m13 0h1m66 0h1M69 210.5h1m30 0h1m37 0h1m5 0h1m34 0h1m60 0h1m32 0h1m24 0h1m30 0h1m0 0h1m116 0h1m20 0h1m27 0h1m46 0h1m89 0h1m58 0h1m127 0h1m17 0h1M37 211.5h1m103 0h1m7 0h1m19 0h1m117 0h1m20 0h1m68 0h1m2 0h1m77 0h1m17 0h1m21 0h1m0 0h1m25 0h1m172 0h1m152 0h1M72 212.5h1m3 0h1m49 0h1m38 0h1m10 0h1m29 0h1m133 0h1m22 0h1m59 0h1m48 0h1m20 0h1m96 0h1m43 0h1m90 0h1m24 0h1M68 213.5h1m40 0h1m102 0h1m4 0h1m5 0h1m81 0h1m46 0h1m32 0h1m123 0h1m29 0h1m33 0h1m108 0h1M24 214.5h1m45 0h1m22 0h1m103 0h1m32 0h1m66 0h1m18 0h1m79 0h1m13 0h1m34 0h1m15 0h1m75 0h1m147 0h1m41 0h1m29 0h1m42 0h1m21 0h1M42 215.5h1m61 0h1m16 0h1m3 0h1m184 0h1m31 0h1m132 0h1m69 0h1m79 0h1m123 0h1m13 0h1m33 0h1m12 0h1M297 216.5h1m127 0h1m33 0h1m35 0h1m101 0h1m48 0h1m58 0h1m115 0h1m23 0h1M28 217.5h1m111 0h1m18 0h1m33 0h1m277 0h1m0 0h1m0 0h1m14 0h1m73 0h1m100 0h1m24 0h1m102 0h1m16 0h1M34 218.5h1m35 0h1m65 0h1m21 0h1m79 0h1m40 0h1m63 0h1m39 0h1m57 0h1m86 0h1m71 0h1m107 0h1m0 0h1m2 0h1m5 0h1m29 0h1m41 0h1M43 219.5h1m72 0h1m4 0h1m168 0h1m41 0h1m47 0h1m32 0h1m29 0h1m47 0h1m27 0h1m148 0h1m88 0h1m41 0h1m1 0h1m11 0h1M90 220.5h1m96 0h1m9 0h1m33 0h1m87 0h1m2 0h1m59 0h1m51 0h1m116 0h1m21 0h1m11 0h1m69 0h1m48 0h1m26 0h1m54 0h1M51 221.5h1m32 0h1m38 0h1m167 0h1m69 0h1m156 0h1m9 0h1m11 0h1m0 0h1m8 0h1m85 0h1m16 0h1m0 0h1m15 0h1m1 0h1m56 0h1m32 0h1M86 222.5h1m32 0h1m54 0h1m58 0h1m3 0h1m46 0h1m17 0h1m7 0h1m62 0h1m11 0h1m74 0h1m37 0h1m135 0h1m73 0h1m29 0h1m1 0h1M90 223.5h1m15 0h1m58 0h1m21 0h1m7 0h1m61 0h1m51 0h1m6 0h1m101 0h1m12 0h1m12 0h1m35 0h1M181 224.5h1m51 0h1m12 0h1m119 0h1m144 0h1m27 0h1m64 0h1m18 0h1M160 225.5h1m76 0h1m207 0h1m117 0h1M30 226.5h1m19 0h1m11 0h1m28 0h1m2 0h1m42 0h1m69 0h1m36 0h1m0 0h1m94 0h1m0 0h1m31 0h1m31 0h1m2 0h1m101 0h1m73 0h1m39 0h1m66 0h1m10 0h1m62 0h1M56 227.5h1m3 0h1m23 0h1m0 0h1m17 0h1m26 0h1m23 0h1m91 0h1m122 0h1m145 0h1m43 0h1m12 0h1m82 0h1m54 0h1m15 0h1m11 0h1m85 0h1M32 228.5h1m40 0h1m34 0h1m7 0h1m138 0h1m3 0h1m41 0h1m35 0h1m134 0h1m72 0h1m37 0h1m77 0h1m56 0h1m9 0h1m61 0h1m49 0h1m3 0h1m16 0h1M90 229.5h1m20 0h1m34 0h1m19 0h1m16 0h1m36 0h1m77 0h1m80 0h1m153 0h1m12 0h1m32 0h1m92 0h1m119 0h1m11 0h1m28 0h1M143 230.5h1m83 0h1m146 0h1m53 0h1m104 0h1m70 0h1M53 231.5h1m9 0h1m26 0h1m19 0h1m61 0h1m6 0h1m97 0h1m183 0h1m17 0h1m0 0h1m3 0h1m363 0h1m8 0h1M116 232.5h1m23 0h1m4 0h1m195 0h1m37 0h1m173 0h1m127 0h1m34 0h1m40 0h1m23 0h1m4 0h1m58 0h1M61 233.5h1m34 0h1m57 0h1m23 0h1m24 0h1m4 0h1m264 0h1m104 0h1m66 0h1m69 0h1m15 0h1m57 0h1m37 0h1M31 234.5h1m83 0h1m56 0h1m99 0h1m75 0h1m5 0h1m43 0h1m3 0h1m134 0h1m63 0h1m81 0h1m21 0h1m113 0h1m3 0h1m6 0h1m35 0h1M16 235.5h1m53 0h1m5 0h1m33 0h1m141 0h1m33 0h1m40 0h1m10 0h1m21 0h1m2 0h1m9 0h1m78 0h1m81 0h1m26 0h1m25 0h1m35 0h1m32 0h1m145 0h1m43 0h1M155 236.5h1m23 0h1m16 0h1m22 0h1m27 0h1m1 0h1m69 0h1m22 0h1m5 0h1m44 0h1m56 0h1m43 0h1m11 0h1m31 0h1m54 0h1m0 0h1m215 0h1m27 0h1M4 237.5h1m149 0h1m10 0h1m257 0h1m27 0h1m64 0h1m15 0h1m60 0h1m1 0h1m90 0h1m29 0h1m2 0h1m48 0h1m25 0h1M173 238.5h1m89 0h1m0 0h1m35 0h1m28 0h1m165 0h1m32 0h1m43 0h1m5 0h1m65 0h1m20 0h1m8 0h1m20 0h1m69 0h1m2 0h1m12 0h1m22 0h1M24 239.5h1m94 0h1m51 0h1m5 0h1m27 0h1m33 0h1m90 0h1m219 0h1m65 0h1m28 0h1m96 0h1m37 0h1m10 0h1m53 0h1m3 0h1M59 240.5h1m6 0h1m166 0h1m15 0h1m102 0h1m26 0h1m91 0h1m4 0h1m9 0h1m69 0h1m42 0h1m79 0h1m59 0h1m122 0h1M53 241.5h1m110 0h1m86 0h1m14 0h1m193 0h1m84 0h1m41 0h1m33 0h1m35 0h1m141 0h1M143 242.5h1m76 0h1m7 0h1m40 0h1m1 0h1m22 0h1m57 0h1m7 0h1m53 0h1m29 0h1m81 0h1m26 0h1m21 0h1m82 0h1m70 0h1m10 0h1m25 0h1m4 0h1m91 0h1M19 243.5h1m105 0h1m21 0h1m53 0h1m77 0h1m193 0h1m27 0h1m31 0h1m87 0h1m19 0h1m12 0h1m157 0h1M1 244.5h1m31 0h1m10 0h1m19 0h1m22 0h1m1 0h1m19 0h1m56 0h1m100 0h1m58 0h1m4 0h1m4 0h1m23 0h1m43 0h1m10 0h1m35 0h1m28 0h1m31 0h1m22 0h1m9 0h1m89 0h1m11 0h1m39 0h1M93 245.5h1m31 0h1m4 0h1m5 0h1m36 0h1m68 0h1m166 0h1m68 0h1m58 0h1m27 0h1m259 0h1M71 246.5h1m2 0h1m39 0h1m89 0h1m75 0h1m87 0h1m5 0h1m138 0h1m86 0h1m0 0h1m162 0h1m91 0h1M31 247.5h1m165 0h1m3 0h1m3 0h1m5 0h1m31 0h1m102 0h1m70 0h1m224 0h1m101 0h1M5 248.5h1m17 0h1m7 0h1m2 0h1m120 0h1m95 0h1m30 0h1m40 0h1m7 0h1m27 0h1m20 0h1m48 0h1m24 0h1m158 0h1m129 0h1m36 0h1M7 249.5h1m6 0h1m6 0h1m0 0h1m89 0h1m126 0h1m31 0h1m8 0h1m124 0h1m31 0h1m18 0h1m47 0h1m15 0h1m23 0h1m157 0h1m12 0h1M53 250.5h1m219 0h1m92 0h1m105 0h1m63 0h1m30 0h1m26 0h1m46 0h1m23 0h1m60 0h1m4 0h1m12 0h1m29 0h1m8 0h1m23 0h1M62 251.5h1m43 0h1m311 0h1m102 0h1m14 0h1m56 0h1m50 0h1m23 0h1m149 0h1m22 0h1M16 252.5h1m53 0h1m21 0h1m16 0h1m31 0h1m88 0h1m190 0h1m125 0h1m12 0h1m129 0h1M132 253.5h1m108 0h1m104 0h1m35 0h1m136 0h1M21 254.5h1m65 0h1m114 0h1m131 0h1m124 0h1m189 0h1m19 0h1m113 0h1M79 255.5h1m56 0h1m47 0h1m85 0h1m9 0h1m34 0h1m9 0h1m33 0h1m6 0h1m2 0h1m127 0h1m239 0h1m126 0h1M113 256.5h1m72 0h1m108 0h1m23 0h1m17 0h1m71 0h1m27 0h1m27 0h1m41 0h1m94 0h1m82 0h1m96 0h1m63 0h1M28 257.5h1m2 0h1m65 0h1m23 0h1m9 0h1m25 0h1m34 0h1m89 0h1m122 0h1m45 0h1m88 0h1m100 0h1m0 0h1m30 0h1m43 0h1m88 0h1m1 0h1M68 258.5h1m0 0h1m31 0h1m33 0h1m16 0h1m4 0h1m103 0h1m3 0h1m351 0h1m7 0h1m59 0h1m152 0h1M12 259.5h1m2 0h1m122 0h1m7 0h1m55 0h1m18 0h1m4 0h1m12 0h1m63 0h1m33 0h1m1 0h1m72 0h1m36 0h1m156 0h1m96 0h1m153 0h1M10 260.5h1m62 0h1m73 0h1m29 0h1m54 0h1m38 0h1m67 0h1m1 0h1m39 0h1m10 0h1m4 0h1m61 0h1m11 0h1m240 0h1m20 0h1M28 261.5h1m3 0h1m39 0h1m58 0h1m53 0h1m22 0h1m83 0h1m38 0h1m60 0h1m14 0h1m44 0h1m17 0h1m80 0h1m29 0h1m58 0h1m23 0h1m5 0h1m130 0h1m43 0h1M219 262.5h1m1 0h1m137 0h1m77 0h1m14 0h1m65 0h1m9 0h1m60 0h1m73 0h1m150 0h1m23 0h1M61 263.5h1m19 0h1m1 0h1m38 0h1m7 0h1m14 0h1m83 0h1m52 0h1m97 0h1m68 0h1m43 0h1m42 0h1m15 0h1m86 0h1m107 0h1M55 264.5h1m19 0h1m82 0h1m76 0h1m10 0h1m3 0h1m65 0h1m60 0h1m40 0h1m87 0h1m2 0h1m65 0h1m3 0h1m90 0h1m198 0h1M0 265.5h1m12 0h1m79 0h1m28 0h1m15 0h1m116 0h1m0 0h1m8 0h1m86 0h1m16 0h1m73 0h1m39 0h1m39 0h1m31 0h1m37 0h1m22 0h1m39 0h1m54 0h1m2 0h1m0 0h1M111 266.5h1m149 0h1m58 0h1m138 0h1m96 0h1m67 0h1m49 0h1m48 0h1m7 0h1m23 0h1m59 0h1m4 0h1m12 0h1m17 0h1M44 267.5h1m62 0h1m32 0h1m177 0h1m74 0h1m3 0h1m7 0h1m237 0h1m55 0h1m12 0h1m10 0h1M21 268.5h1m123 0h1m27 0h1m5 0h1m120 0h1m24 0h1m6 0h1m4 0h1m174 0h1m19 0h1m73 0h1m30 0h1m181 0h1m27 0h1M3 269.5h1m100 0h1m108 0h1m96 0h1m18 0h1m77 0h1m2 0h1m13 0h1m129 0h1m122 0h1m35 0h1m48 0h1m4 0h1M4 270.5h1m0 0h1m7 0h1m1 0h1m52 0h1m7 0h1m16 0h1m63 0h1m253 0h1m35 0h1m53 0h1m85 0h1m168 0h1m13 0h1m40 0h1M148 271.5h1m54 0h1m22 0h1m20 0h1m313 0h1m32 0h1m32 0h1m69 0h1m4 0h1m55 0h1m1 0h1m12 0h1m17 0h1m74 0h1M35 272.5h1m31 0h1m1 0h1m66 0h1m4 0h1m112 0h1m0 0h1m28 0h1m91 0h1m25 0h1m51 0h1m54 0h1m272 0h1m43 0h1m11 0h1M124 273.5h1m18 0h1m8 0h1m85 0h1m81 0h1m167 0h1m2 0h1m35 0h1m86 0h1m4 0h1M226 274.5h1m27 0h1m55 0h1m16 0h1m94 0h1m157 0h1m60 0h1m158 0h1M154 275.5h1m40 0h1m97 0h1m53 0h1m112 0h1m79 0h1m10 0h1m119 0h1m7 0h1m73 0h1m9 0h1M28 276.5h1m64 0h1m19 0h1m271 0h1m4 0h1m67 0h1m23 0h1m20 0h1m4 0h1m172 0h1M7 277.5h1m60 0h1m21 0h1m3 0h1m11 0h1m10 0h1m137 0h1m143 0h1m7 0h1m12 0h1m60 0h1m58 0h1M42 278.5h1m71 0h1m156 0h1m20 0h1m78 0h1m18 0h1m124 0h1m9 0h1m217 0h1M46 279.5h1m311 0h1m335 0h1M36 280.5h1m30 0h1m13 0h1m55 0h1m10 0h1m109 0h1m29 0h1m26 0h1m54 0h1m0 0h1m38 0h1m33 0h1m0 0h1m14 0h1m126 0h1m28 0h1m18 0h1m9 0h1m32 0h1m25 0h1m74 0h1M182 281.5h1m7 0h1m36 0h1m78 0h1m6 0h1m107 0h1m26 0h1m8 0h1m169 0h1m0 0h1m144 0h1M178 282.5h1m27 0h1m32 0h1m20 0h1m9 0h1m91 0h1m9 0h1m26 0h1m71 0h1m46 0h1m99 0h1m95 0h1m62 0h1M19 283.5h1m184 0h1m75 0h1m54 0h1m3 0h1m4 0h1m71 0h1m67 0h1m146 0h1m48 0h1m87 0h1m69 0h1m8 0h1M126 284.5h1m70 0h1m90 0h1m2 0h1m105 0h1m13 0h1m78 0h1m19 0h1m61 0h1m28 0h1m32 0h1m5 0h1m10 0h1m55 0h1m75 0h1m3 0h1M41 285.5h1m47 0h1m1 0h1m221 0h1m71 0h1m6 0h1m9 0h1m68 0h1m14 0h1m76 0h1m76 0h1m17 0h1m28 0h1M28 286.5h1m238 0h1m30 0h1m0 0h1m0 0h1m35 0h1m90 0h1m68 0h1m86 0h1m5 0h1m189 0h1M1 287.5h1m47 0h1m74 0h1m52 0h1m47 0h1m127 0h1m6 0h1m256 0h1m73 0h1m28 0h1m99 0h1m3 0h1M10 288.5h1m10 0h1m78 0h1m33 0h1m22 0h1m82 0h1m19 0h1m8 0h1m73 0h1m27 0h1m3 0h1m117 0h1m24 0h1m38 0h1m73 0h1M38 289.5h1m130 0h1m35 0h1m41 0h1m40 0h1m282 0h1m24 0h1m38 0h1m193 0h1m6 0h1M153 290.5h1m71 0h1m130 0h1m62 0h1m58 0h1m294 0h1m42 0h1m43 0h1M45 291.5h1m24 0h1m450 0h1m185 0h1M93 292.5h1m2 0h1m200 0h1m18 0h1m49 0h1m85 0h1m22 0h1m206 0h1m43 0h1m22 0h1m20 0h1m83 0h1M1 293.5h1m196 0h1m260 0h1m97 0h1m101 0h1m40 0h1m48 0h1m55 0h1m48 0h1m0 0h1m11 0h1M20 294.5h1m11 0h1m7 0h1m182 0h1m68 0h1m181 0h1m12 0h1m15 0h1m45 0h1m38 0h1m93 0h1m17 0h1m57 0h1m85 0h1M72 295.5h1m106 0h1m9 0h1m104 0h1m154 0h1m13 0h1m78 0h1m48 0h1m93 0h1m183 0h1M17 296.5h1m62 0h1m36 0h1m22 0h1m0 0h1m43 0h1m12 0h1m200 0h1m45 0h1m35 0h1m54 0h1m30 0h1m153 0h1m35 0h1m88 0h1m20 0h1M7 297.5h1m180 0h1m60 0h1m40 0h1m30 0h1m140 0h1m94 0h1m114 0h1m4 0h1m68 0h1m64 0h1M108 298.5h1m50 0h1m26 0h1m101 0h1m38 0h1m76 0h1m202 0h1m122 0h1M119 299.5h1m97 0h1m474 0h1m25 0h1m69 0h1m27 0h1M44 300.5h1m10 0h1m2 0h1m32 0h1m92 0h1m122 0h1m178 0h1m177 0h1m6 0h1m37 0h1m62 0h1m25 0h1M113 301.5h1m115 0h1m208 0h1m40 0h1m59 0h1m150 0h1m5 0h1M25 302.5h1m16 0h1m273 0h1m70 0h1m6 0h1m105 0h1m28 0h1m25 0h1m32 0h1m128 0h1m39 0h1m10 0h1m9 0h1m2 0h1m1 0h1m25 0h1m20 0h1M98 303.5h1m107 0h1m70 0h1m176 0h1m57 0h1m131 0h1m28 0h1m7 0h1m160 0h1m23 0h1M54 304.5h1m88 0h1m56 0h1m81 0h1m5 0h1m113 0h1m220 0h1m60 0h1m65 0h1m25 0h1m24 0h1m37 0h1M33 305.5h1m57 0h1m111 0h1m65 0h1m126 0h1m45 0h1m67 0h1m71 0h1m96 0h1m81 0h1m14 0h1m29 0h1M117 306.5h1m143 0h1m62 0h1m45 0h1m134 0h1m113 0h1m37 0h1m24 0h1m0 0h1m30 0h1m69 0h1M0 307.5h1m3 0h1m21 0h1m38 0h1m17 0h1m101 0h1m72 0h1m131 0h1m17 0h1m61 0h1m121 0h1m18 0h1m50 0h1m3 0h1m5 0h1m7 0h1m73 0h1m87 0h1m26 0h1M10 308.5h1m128 0h1m7 0h1m125 0h1m42 0h1m57 0h1m3 0h1m28 0h1m6 0h1m8 0h1m69 0h1m248 0h1m40 0h1m7 0h1m11 0h1M32 309.5h1m103 0h1m27 0h1m115 0h1m54 0h1m41 0h1m27 0h1m9 0h1m124 0h1m95 0h1m33 0h1m7 0h1m134 0h1m3 0h1M98 310.5h1m30 0h1m26 0h1m38 0h1m21 0h1m43 0h1m32 0h1m99 0h1m76 0h1m101 0h1m36 0h1m68 0h1m95 0h1m45 0h1m12 0h1m13 0h1M131 311.5h1m1 0h1m59 0h1m9 0h1m83 0h1m18 0h1m7 0h1m32 0h1m66 0h1m83 0h1m33 0h1m16 0h1m17 0h1m92 0h1m6 0h1m117 0h1M42 312.5h1m72 0h1m60 0h1m96 0h1m45 0h1m120 0h1m6 0h1m62 0h1m13 0h1m22 0h1m15 0h1m106 0h1m40 0h1m99 0h1m8 0h1m14 0h1m2 0h1m29 0h1M86 313.5h1m22 0h1m30 0h1m34 0h1m2 0h1m27 0h1m15 0h1m140 0h1m2 0h1m168 0h1m27 0h1M18 314.5h1m298 0h1m21 0h1m90 0h1m82 0h1m169 0h1m23 0h1m13 0h1m107 0h1m2 0h1m26 0h1M70 315.5h1m95 0h1m0 0h1m65 0h1m64 0h1m134 0h1m84 0h1m65 0h1m8 0h1m2 0h1m140 0h1m24 0h1M24 316.5h1m138 0h1m15 0h1m49 0h1m23 0h1m24 0h1m144 0h1m96 0h1m15 0h1m78 0h1m102 0h1m68 0h1m6 0h1m10 0h1m51 0h1M4 317.5h1m57 0h1m27 0h1m13 0h1m26 0h1m74 0h1m92 0h1m10 0h1m39 0h1m36 0h1m58 0h1m23 0h1m9 0h1m27 0h1m41 0h1m295 0h1M76 318.5h1m16 0h1m56 0h1m32 0h1m50 0h1m15 0h1m131 0h1m15 0h1m59 0h1m22 0h1m59 0h1m23 0h1m85 0h1m23 0h1m59 0h1m117 0h1M5 319.5h1m26 0h1m128 0h1m27 0h1m39 0h1m77 0h1m134 0h1m52 0h1m201 0h1m53 0h1M11 320.5h1m76 0h1m7 0h1m139 0h1m50 0h1m29 0h1m6 0h1m150 0h1m348 0h1M84 321.5h1m22 0h1m81 0h1m77 0h1m43 0h1m108 0h1m39 0h1m11 0h1m33 0h1m127 0h1m111 0h1m6 0h1m28 0h1m12 0h1m49 0h1M103 322.5h1m290 0h1m99 0h1m150 0h1m151 0h1m0 0h1M56 323.5h1m102 0h1m18 0h1m173 0h1m32 0h1m20 0h1m45 0h1m69 0h1m39 0h1m15 0h1m15 0h1m3 0h1m4 0h1m92 0h1m102 0h1M13 324.5h1m35 0h1m27 0h1m61 0h1m128 0h1M11 325.5h1m6 0h1m92 0h1m36 0h1m3 0h1m48 0h1m31 0h1m31 0h1m201 0h1m10 0h1m88 0h1m17 0h1m18 0h1m41 0h1m120 0h1m3 0h1m30 0h1M38 326.5h1m24 0h1m179 0h1m19 0h1m37 0h1m43 0h1m0 0h1m147 0h1m101 0h1m27 0h1m9 0h1m69 0h1m5 0h1m52 0h1M5 327.5h1m10 0h1m128 0h1m19 0h1m143 0h1m25 0h1m189 0h1m182 0h1m51 0h1m34 0h1m1 0h1m25 0h1m44 0h1M64 328.5h1m18 0h1m32 0h1m34 0h1m0 0h1m11 0h1m37 0h1m21 0h1m9 0h1m20 0h1m238 0h1m44 0h1m55 0h1m34 0h1m4 0h1m177 0h1m22 0h1m16 0h1m9 0h1M2 329.5h1m112 0h1m4 0h1m73 0h1m4 0h1m4 0h1m47 0h1m239 0h1m8 0h1m94 0h1m3 0h1m24 0h1m1 0h1m35 0h1m109 0h1m3 0h1m35 0h1m8 0h1M9 330.5h1m267 0h1m35 0h1m317 0h1m23 0h1m31 0h1m12 0h1m31 0h1M48 331.5h1m113 0h1m34 0h1m94 0h1m125 0h1m48 0h1m8 0h1m5 0h1m40 0h1m31 0h1m4 0h1m3 0h1m23 0h1m10 0h1m77 0h1m5 0h1m138 0h1m2 0h1M1 332.5h1m27 0h1m20 0h1m19 0h1m16 0h1m35 0h1m0 0h1m20 0h1m19 0h1m56 0h1m17 0h1m53 0h1m63 0h1m56 0h1m26 0h1m9 0h1m23 0h1m21 0h1m118 0h1M35 333.5h1m76 0h1m218 0h1m91 0h1m20 0h1m8 0h1m3 0h1m9 0h1m12 0h1m12 0h1m40 0h1m33 0h1m11 0h1m4 0h1m85 0h1m12 0h1m78 0h1m16 0h1m1 0h1M38 334.5h1m82 0h1m41 0h1m89 0h1m75 0h1m26 0h1m3 0h1m7 0h1m21 0h1m113 0h1m53 0h1m34 0h1m49 0h1m35 0h1m15 0h1m21 0h1m42 0h1m38 0h1m10 0h1M95 335.5h1m11 0h1m109 0h1m156 0h1m99 0h1m87 0h1m16 0h1m68 0h1m21 0h1m24 0h1m142 0h1m17 0h1M94 336.5h1m39 0h1m5 0h1m14 0h1m128 0h1m59 0h1m27 0h1m1 0h1m18 0h1m386 0h1m54 0h1m32 0h1M112 337.5h1m19 0h1m41 0h1m78 0h1m80 0h1m3 0h1m30 0h1m64 0h1m49 0h1m53 0h1m2 0h1m2 0h1m83 0h1m138 0h1M68 338.5h1m21 0h1m136 0h1m140 0h1m52 0h1m98 0h1m40 0h1m5 0h1m105 0h1m3 0h1m20 0h1m46 0h1M46 339.5h1m38 0h1m37 0h1m8 0h1m13 0h1m39 0h1m37 0h1m128 0h1m39 0h1m140 0h1m103 0h1m3 0h1m97 0h1m24 0h1m26 0h1M62 340.5h1m56 0h1m98 0h1m63 0h1m60 0h1m100 0h1m18 0h1m22 0h1m314 0h1M77 341.5h1m102 0h1m9 0h1m1 0h1m56 0h1m14 0h1m13 0h1m134 0h1m17 0h1m8 0h1M89 342.5h1m30 0h1m8 0h1m33 0h1m164 0h1m239 0h1m27 0h1m23 0h1m42 0h1m19 0h1m139 0h1m5 0h1M1 343.5h1m38 0h1m69 0h1m6 0h1m8 0h1m84 0h1m34 0h1m52 0h1m27 0h1m38 0h1m6 0h1m65 0h1m246 0h1m38 0h1m2 0h1M19 344.5h1m42 0h1m33 0h1m37 0h1m131 0h1m85 0h1m136 0h1m21 0h1m40 0h1m3 0h1m102 0h1m157 0h1m2 0h1M9 345.5h1m13 0h1m50 0h1m19 0h1m13 0h1m92 0h1m146 0h1m66 0h1m10 0h1m8 0h1m58 0h1m209 0h1m16 0h1m74 0h1M19 346.5h1m77 0h1m51 0h1m133 0h1m37 0h1m9 0h1m158 0h1m221 0h1m11 0h1m30 0h1m12 0h1m53 0h1m41 0h1m3 0h1M11 347.5h1m140 0h1m80 0h1m9 0h1m166 0h1m52 0h1m10 0h1m145 0h1m17 0h1m0 0h1m49 0h1m48 0h1m127 0h1M112 348.5h1m145 0h1m9 0h1m55 0h1m52 0h1m28 0h1m36 0h1m9 0h1m12 0h1m63 0h1m4 0h1m6 0h1m101 0h1m62 0h1m38 0h1m21 0h1m52 0h1M67 349.5h1m95 0h1m31 0h1m58 0h1m26 0h1m29 0h1m20 0h1m41 0h1m28 0h1m96 0h1m176 0h1m68 0h1m16 0h1m64 0h1M25 350.5h1m78 0h1m73 0h1m56 0h1m33 0h1m180 0h1m20 0h1m42 0h1m7 0h1m77 0h1m35 0h1m13 0h1m84 0h1m39 0h1m12 0h1m23 0h1m18 0h1M158 351.5h1m7 0h1m14 0h1m108 0h1m15 0h1m52 0h1m48 0h1m15 0h1m25 0h1m25 0h1m15 0h1m41 0h1m171 0h1m21 0h1m96 0h1m29 0h1M1 352.5h1m152 0h1m43 0h1m8 0h1m1 0h1m2 0h1m1 0h1m3 0h1m16 0h1m1 0h1m9 0h1m20 0h1m117 0h1m39 0h1m6 0h1m56 0h1M45 353.5h1m169 0h1m59 0h1m50 0h1m88 0h1m102 0h1m23 0h1m0 0h1M57 354.5h1m74 0h1m139 0h1m163 0h1m103 0h1m139 0h1m125 0h1m43 0h1M40 355.5h1m122 0h1m34 0h1m78 0h1m102 0h1m14 0h1m18 0h1m91 0h1m23 0h1m12 0h1m114 0h1m4 0h1m20 0h1m46 0h1m0 0h1m36 0h1m42 0h1m25 0h1M4 356.5h1m214 0h1m76 0h1m157 0h1m76 0h1m85 0h1m2 0h1m117 0h1m84 0h1m42 0h1M75 357.5h1m3 0h1m14 0h1m0 0h1m21 0h1m63 0h1m1 0h1m52 0h1m36 0h1m6 0h1m67 0h1m96 0h1m11 0h1m76 0h1m62 0h1M101 358.5h1m6 0h1m232 0h1m6 0h1m100 0h1m30 0h1m179 0h1m12 0h1m66 0h1M67 359.5h1m37 0h1m30 0h1m18 0h1m73 0h1m23 0h1m99 0h1m36 0h1m217 0h1m11 0h1m56 0h1m12 0h1m0 0h1m3 0h1m28 0h1m74 0h1m22 0h1m22 0h1M75 360.5h1m2 0h1m10 0h1m63 0h1m108 0h1m80 0h1m50 0h1m13 0h1m21 0h1m88 0h1m9 0h1m29 0h1m124 0h1m30 0h1m37 0h1m0 0h1m1 0h1m91 0h1M12 361.5h1m31 0h1m11 0h1m237 0h1m4 0h1m11 0h1m28 0h1m42 0h1m41 0h1m152 0h1m16 0h1m100 0h1M43 362.5h1m18 0h1m1 0h1m20 0h1m16 0h1m12 0h1m65 0h1m32 0h1m45 0h1m32 0h1m103 0h1m44 0h1m24 0h1M2 363.5h1m206 0h1m81 0h1m7 0h1m233 0h1m15 0h1m4 0h1m16 0h1m135 0h1m37 0h1M102 364.5h1m68 0h1m38 0h1m34 0h1m43 0h1m50 0h1m66 0h1m178 0h1m75 0h1m37 0h1m45 0h1m57 0h1M3 365.5h1m119 0h1m11 0h1m64 0h1m46 0h1m71 0h1m53 0h1m15 0h1m31 0h1m57 0h1m45 0h1m9 0h1m3 0h1m17 0h1m81 0h1m73 0h1m40 0h1m85 0h1M54 366.5h1m81 0h1m35 0h1m1 0h1m39 0h1m2 0h1m17 0h1m43 0h1m272 0h1m57 0h1m12 0h1M8 367.5h1m92 0h1m84 0h1m125 0h1m58 0h1m20 0h1m145 0h1m28 0h1M12 368.5h1m76 0h1m6 0h1m34 0h1m58 0h1m171 0h1m16 0h1m12 0h1m39 0h1m32 0h1m38 0h1m17 0h1m43 0h1m21 0h1m4 0h1m57 0h1m69 0h1m1 0h1m23 0h1m36 0h1m68 0h1M12 369.5h1m75 0h1m95 0h1m102 0h1m61 0h1m266 0h1m35 0h1m59 0h1m21 0h1m18 0h1m84 0h1m19 0h1M69 370.5h1m5 0h1m134 0h1m34 0h1m56 0h1m63 0h1m56 0h1m21 0h1m25 0h1m17 0h1m13 0h1m1 0h1m38 0h1m37 0h1m3 0h1m68 0h1m93 0h1m114 0h1M68 371.5h1m33 0h1m40 0h1m30 0h1m196 0h1m33 0h1m11 0h1m158 0h1m5 0h1m92 0h1m59 0h1m21 0h1m8 0h1m11 0h1m16 0h1M18 372.5h1m48 0h1m62 0h1m26 0h1m34 0h1m44 0h1m43 0h1m8 0h1m32 0h1m31 0h1m7 0h1m74 0h1m38 0h1m27 0h1m157 0h1m17 0h1m78 0h1m10 0h1m3 0h1M3 373.5h1m411 0h1m123 0h1m73 0h1m52 0h1m25 0h1m27 0h1m64 0h1m6 0h1m76 0h1M51 374.5h1m138 0h1m74 0h1m184 0h1m190 0h1m1 0h1m30 0h1m58 0h1m5 0h1m3 0h1m17 0h1m70 0h1m33 0h1M30 375.5h1m141 0h1m33 0h1m2 0h1m14 0h1m51 0h1m18 0h1m29 0h1m5 0h1m47 0h1m4 0h1m36 0h1m108 0h1m45 0h1m14 0h1m58 0h1m34 0h1m26 0h1m33 0h1M11 376.5h1m79 0h1m5 0h1m65 0h1m110 0h1m28 0h1m19 0h1m50 0h1m25 0h1m80 0h1m33 0h1m17 0h1m67 0h1m51 0h1m20 0h1m57 0h1m11 0h1M59 377.5h1m151 0h1m83 0h1m23 0h1m86 0h1m82 0h1m26 0h1m11 0h1m135 0h1m36 0h1m84 0h1m10 0h1m11 0h1M73 378.5h1m33 0h1m25 0h1m7 0h1m38 0h1m51 0h1m44 0h1m39 0h1m49 0h1m35 0h1m9 0h1m6 0h1m8 0h1m7 0h1m73 0h1m52 0h1m5 0h1m61 0h1m11 0h1m9 0h1m11 0h1m189 0h1M17 379.5h1m73 0h1m192 0h1m75 0h1m276 0h1m47 0h1m67 0h1M108 380.5h1m7 0h1m21 0h1m11 0h1m13 0h1m6 0h1m95 0h1m150 0h1m213 0h1m62 0h1m23 0h1m33 0h1m1 0h1m32 0h1m12 0h1m21 0h1m18 0h1m8 0h1M48 381.5h1m16 0h1m10 0h1m123 0h1m58 0h1m76 0h1m24 0h1m156 0h1m209 0h1m2 0h1m8 0h1m120 0h1M31 382.5h1m47 0h1m39 0h1m9 0h1m10 0h1m71 0h1m274 0h1m94 0h1m190 0h1m17 0h1m67 0h1M78 383.5h1m89 0h1m8 0h1m18 0h1m3 0h1m42 0h1m261 0h1m233 0h1m51 0h1m7 0h1M41 384.5h1m28 0h1m97 0h1m102 0h1m18 0h1m21 0h1m4 0h1m101 0h1m91 0h1m43 0h1m90 0h1m120 0h1m9 0h1m52 0h1m20 0h1M29 385.5h1m45 0h1m29 0h1m1 0h1m0 0h1m143 0h1m20 0h1m49 0h1m28 0h1m7 0h1m35 0h1m159 0h1m19 0h1m0 0h1m50 0h1m53 0h1M6 386.5h1m157 0h1m95 0h1m67 0h1m6 0h1m48 0h1m61 0h1m123 0h1m9 0h1m85 0h1m12 0h1M77 387.5h1m40 0h1m45 0h1m20 0h1m2 0h1m2 0h1m48 0h1m65 0h1m77 0h1m18 0h1m87 0h1m6 0h1m31 0h1m68 0h1m19 0h1m9 0h1m13 0h1m36 0h1m68 0h1m85 0h1M121 388.5h1m53 0h1m43 0h1m32 0h1m48 0h1m8 0h1m61 0h1m472 0h1M55 389.5h1m61 0h1m41 0h1m1 0h1m71 0h1m20 0h1m37 0h1m38 0h1m3 0h1m31 0h1m215 0h1m22 0h1m96 0h1m120 0h1M88 390.5h1m116 0h1m37 0h1m78 0h1m6 0h1m86 0h1m57 0h1m47 0h1m7 0h1m82 0h1m67 0h1m35 0h1m42 0h1m36 0h1m18 0h1m3 0h1m30 0h1M22 391.5h1m51 0h1m11 0h1m80 0h1m168 0h1m37 0h1m117 0h1m12 0h1m78 0h1m151 0h1m91 0h1M12 392.5h1m306 0h1m134 0h1m104 0h1m85 0h1m58 0h1m13 0h1m43 0h1M200 393.5h1m23 0h1m29 0h1m24 0h1m24 0h1m95 0h1m261 0h1m4 0h1m23 0h1m81 0h1m19 0h1m73 0h1M61 394.5h1m37 0h1m173 0h1m53 0h1m10 0h1m57 0h1m20 0h1m19 0h1m22 0h1m27 0h1m39 0h1m3 0h1m13 0h1m206 0h1m56 0h1M92 395.5h1m14 0h1m183 0h1m112 0h1m40 0h1m40 0h1m178 0h1m15 0h1m65 0h1m10 0h1m35 0h1m55 0h1M14 396.5h1m127 0h1m5 0h1m13 0h1m14 0h1m47 0h1m11 0h1m22 0h1m96 0h1m96 0h1m73 0h1m32 0h1m41 0h1m27 0h1m6 0h1m148 0h1m11 0h1m14 0h1M4 397.5h1m26 0h1m22 0h1m265 0h1m8 0h1m37 0h1m161 0h1m73 0h1m142 0h1m7 0h1m35 0h1m28 0h1M17 398.5h1m178 0h1m110 0h1m66 0h1m60 0h1m84 0h1m129 0h1m22 0h1m145 0h1M25 399.5h1m94 0h1m56 0h1m14 0h1m55 0h1m19 0h1m140 0h1m89 0h1m244 0h1M89 400.5h1m113 0h1m72 0h1m50 0h1m73 0h1m5 0h1m17 0h1m18 0h1m49 0h1m34 0h1m176 0h1m4 0h1m59 0h1M5 401.5h1m14 0h1m26 0h1m76 0h1m8 0h1m147 0h1m4 0h1m116 0h1m5 0h1m11 0h1m45 0h1m3 0h1m163 0h1m85 0h1m98 0h1M66 402.5h1m79 0h1m41 0h1m38 0h1m160 0h1m110 0h1m38 0h1m20 0h1m49 0h1m0 0h1m0 0h1m111 0h1m72 0h1M57 403.5h1m35 0h1m54 0h1m109 0h1m84 0h1m26 0h1m56 0h1m48 0h1m20 0h1m72 0h1m22 0h1m16 0h1m224 0h1M25 404.5h1m77 0h1m73 0h1m115 0h1m107 0h1m6 0h1m1 0h1m14 0h1m143 0h1m10 0h1m49 0h1m62 0h1M85 405.5h1m2 0h1m136 0h1m55 0h1m89 0h1m11 0h1m97 0h1m45 0h1m7 0h1m63 0h1m4 0h1m55 0h1m15 0h1M275 406.5h1m71 0h1m82 0h1m37 0h1m6 0h1m114 0h1m21 0h1m43 0h1m107 0h1m66 0h1m16 0h1m17 0h1M160 407.5h1m77 0h1m72 0h1m6 0h1m131 0h1m18 0h1m19 0h1m19 0h1m72 0h1m94 0h1m126 0h1m54 0h1M13 408.5h1m244 0h1m110 0h1m37 0h1m21 0h1m129 0h1m134 0h1m137 0h1m3 0h1M29 409.5h1m12 0h1m47 0h1m32 0h1m9 0h1m13 0h1m82 0h1m6 0h1m26 0h1m10 0h1m63 0h1m51 0h1m20 0h1m199 0h1m139 0h1m48 0h1m43 0h1M93 410.5h1m18 0h1m141 0h1m55 0h1m2 0h1m32 0h1m146 0h1m44 0h1m116 0h1m123 0h1m54 0h1m2 0h1m28 0h1M49 411.5h1m17 0h1m98 0h1m133 0h1m142 0h1m9 0h1m20 0h1m23 0h1m53 0h1m31 0h1m60 0h1m9 0h1m39 0h1m2 0h1M1 412.5h1m33 0h1m52 0h1m25 0h1m49 0h1m48 0h1m72 0h1m47 0h1m8 0h1m50 0h1m53 0h1m113 0h1m17 0h1M71 413.5h1m218 0h1m12 0h1m113 0h1m60 0h1m48 0h1m200 0h1m64 0h1M95 414.5h1m4 0h1m123 0h1m28 0h1m12 0h1m103 0h1m29 0h1m121 0h1m66 0h1m28 0h1m16 0h1m77 0h1m25 0h1m26 0h1m34 0h1M87 415.5h1m36 0h1m14 0h1m111 0h1m106 0h1m10 0h1m38 0h1m99 0h1m122 0h1m19 0h1m60 0h1m146 0h1M15 416.5h1m16 0h1m267 0h1m120 0h1m416 0h1m8 0h1M60 417.5h1m3 0h1m2 0h1m185 0h1m75 0h1m100 0h1m35 0h1m139 0h1m24 0h1m97 0h1m46 0h1m63 0h1M212 418.5h1m187 0h1m3 0h1m26 0h1m81 0h1m6 0h1m3 0h1m31 0h1m188 0h1m62 0h1m4 0h1M13 419.5h1m6 0h1m80 0h1m23 0h1m39 0h1m12 0h1m151 0h1m23 0h1m97 0h1M4 420.5h1m26 0h1m18 0h1m1 0h1m129 0h1m132 0h1m67 0h1m6 0h1m37 0h1m13 0h1m36 0h1m120 0h1m91 0h1m13 0h1m23 0h1M29 421.5h1m129 0h1m156 0h1m38 0h1m62 0h1m258 0h1m30 0h1m52 0h1m43 0h1m11 0h1m11 0h1M13 422.5h1m6 0h1m171 0h1m135 0h1m74 0h1m10 0h1m71 0h1m122 0h1m16 0h1m144 0h1m35 0h1M16 423.5h1m8 0h1m51 0h1m67 0h1m31 0h1m79 0h1m84 0h1m1 0h1m7 0h1m8 0h1m30 0h1m44 0h1m106 0h1m24 0h1m208 0h1m28 0h1M51 424.5h1m12 0h1m27 0h1m114 0h1m251 0h1m78 0h1m25 0h1m22 0h1m44 0h1m71 0h1m52 0h1m21 0h1M57 425.5h1m13 0h1m77 0h1m47 0h1m55 0h1m126 0h1m104 0h1m41 0h1m30 0h1m101 0h1m2 0h1m1 0h1m57 0h1m11 0h1M64 426.5h1m48 0h1m22 0h1m3 0h1m35 0h1m39 0h1m23 0h1m39 0h1m37 0h1m35 0h1m25 0h1m1 0h1m27 0h1m13 0h1m143 0h1m0 0h1m112 0h1m6 0h1m134 0h1m12 0h1m2 0h1M122 427.5h1m87 0h1m4 0h1m26 0h1m134 0h1m158 0h1m26 0h1m2 0h1m77 0h1m21 0h1M15 428.5h1m6 0h1m25 0h1m27 0h1m3 0h1m191 0h1m15 0h1m10 0h1m10 0h1m133 0h1m0 0h1m138 0h1m35 0h1m54 0h1m53 0h1M8 429.5h1m29 0h1m73 0h1m26 0h1m47 0h1m77 0h1m4 0h1m25 0h1m28 0h1m45 0h1m101 0h1m183 0h1M92 430.5h1m48 0h1m49 0h1m47 0h1m28 0h1m21 0h1m51 0h1m4 0h1m3 0h1m7 0h1m57 0h1m51 0h1m45 0h1m7 0h1m106 0h1m4 0h1m28 0h1m25 0h1m19 0h1m24 0h1M37 431.5h1m8 0h1m145 0h1m36 0h1m16 0h1m77 0h1m22 0h1m88 0h1m3 0h1m47 0h1m7 0h1m1 0h1m6 0h1m20 0h1m9 0h1m41 0h1m49 0h1m43 0h1m49 0h1m69 0h1M126 432.5h1m94 0h1m19 0h1m4 0h1m8 0h1m18 0h1m75 0h1m57 0h1m146 0h1m161 0h1m15 0h1m105 0h1m19 0h1M13 433.5h1m117 0h1m124 0h1m33 0h1m53 0h1m161 0h1m6 0h1m64 0h1m37 0h1m7 0h1m76 0h1M31 434.5h1m36 0h1m23 0h1m9 0h1m130 0h1m40 0h1m4 0h1m77 0h1m79 0h1m123 0h1m31 0h1m108 0h1m120 0h1M49 435.5h1m255 0h1m27 0h1m64 0h1m75 0h1m9 0h1m181 0h1m26 0h1m7 0h1m49 0h1M164 436.5h1m39 0h1m31 0h1m146 0h1m128 0h1m42 0h1m23 0h1m32 0h1m8 0h1m27 0h1m29 0h1m103 0h1M149 437.5h1m0 0h1m52 0h1m16 0h1m22 0h1m146 0h1m110 0h1m6 0h1m187 0h1m31 0h1M49 438.5h1m89 0h1m12 0h1m80 0h1m135 0h1m0 0h1m101 0h1m23 0h1m101 0h1m71 0h1m25 0h1m94 0h1m1 0h1m9 0h1M166 439.5h1m353 0h1m39 0h1m81 0h1m44 0h1m47 0h1m42 0h1m75 0h1M140 440.5h1m81 0h1m144 0h1m161 0h1m58 0h1m38 0h1m44 0h1m143 0h1m24 0h1M38 441.5h1m22 0h1m31 0h1m71 0h1m251 0h1m37 0h1m248 0h1m101 0h1m2 0h1m35 0h1m24 0h1M68 442.5h1m39 0h1m36 0h1m151 0h1m75 0h1m90 0h1m1 0h1m5 0h1m36 0h1m13 0h1m9 0h1m57 0h1m27 0h1m107 0h1m75 0h1m10 0h1m26 0h1M2 443.5h1m308 0h1m73 0h1m197 0h1m64 0h1m49 0h1m56 0h1m102 0h1M226 444.5h1m29 0h1m50 0h1m3 0h1m36 0h1m2 0h1m261 0h1m80 0h1m31 0h1m93 0h1M3 445.5h1m105 0h1m76 0h1m103 0h1m41 0h1m21 0h1m146 0h1m25 0h1m22 0h1m27 0h1m41 0h1m54 0h1m11 0h1m117 0h1m10 0h1M31 446.5h1m142 0h1m43 0h1m53 0h1m65 0h1m26 0h1m6 0h1m36 0h1m63 0h1m100 0h1m26 0h1m67 0h1m62 0h1m88 0h1M27 447.5h1m30 0h1m105 0h1m54 0h1m42 0h1m60 0h1m29 0h1m5 0h1m6 0h1m17 0h1m4 0h1m18 0h1m22 0h1m15 0h1m48 0h1m43 0h1m10 0h1m6 0h1m29 0h1m104 0h1m85 0h1m54 0h1M165 448.5h1m14 0h1m81 0h1m155 0h1m227 0h1m4 0h1m112 0h1m26 0h1m62 0h1M47 449.5h1m78 0h1m6 0h1m15 0h1m25 0h1m27 0h1m20 0h1m28 0h1m38 0h1m39 0h1m129 0h1m118 0h1m6 0h1m129 0h1m40 0h1M19 450.5h1m1 0h1m70 0h1m111 0h1m4 0h1m12 0h1m43 0h1m19 0h1m180 0h1m132 0h1m9 0h1m34 0h1m37 0h1m87 0h1m29 0h1m17 0h1m34 0h1m5 0h1M12 451.5h1m52 0h1m91 0h1m59 0h1m220 0h1m72 0h1m66 0h1m24 0h1m159 0h1m2 0h1M191 452.5h1m5 0h1m147 0h1m133 0h1m208 0h1m132 0h1m45 0h1M4 453.5h1m39 0h1m98 0h1m22 0h1m172 0h1m160 0h1m67 0h1m37 0h1m27 0h1m16 0h1m35 0h1m13 0h1m21 0h1m49 0h1m24 0h1M64 454.5h1m110 0h1m193 0h1m19 0h1m38 0h1m104 0h1m11 0h1m62 0h1m110 0h1M6 455.5h1m6 0h1m20 0h1m33 0h1m1 0h1m63 0h1m57 0h1m0 0h1m139 0h1m81 0h1m39 0h1m59 0h1m216 0h1M81 456.5h1m6 0h1m79 0h1m9 0h1m74 0h1m5 0h1m15 0h1m20 0h1m0 0h1m66 0h1m15 0h1m28 0h1m4 0h1m24 0h1m0 0h1m54 0h1m9 0h1m14 0h1m72 0h1m68 0h1m60 0h1m21 0h1m42 0h1m34 0h1M197 457.5h1m53 0h1m147 0h1m13 0h1m0 0h1m132 0h1m6 0h1m42 0h1m14 0h1m67 0h1m45 0h1m69 0h1m0 0h1m58 0h1M58 458.5h1m168 0h1m18 0h1m20 0h1m138 0h1m2 0h1m166 0h1m42 0h1m60 0h1m64 0h1m3 0h1m65 0h1m44 0h1m8 0h1M83 459.5h1m53 0h1m24 0h1m7 0h1m5 0h1m127 0h1m46 0h1m153 0h1m70 0h1m90 0h1m103 0h1m50 0h1m37 0h1M119 460.5h1m1 0h1m105 0h1m37 0h1m153 0h1m193 0h1m6 0h1m156 0h1m9 0h1m37 0h1M60 461.5h1m68 0h1m78 0h1m1 0h1m14 0h1m45 0h1m28 0h1m24 0h1m54 0h1m72 0h1m243 0h1m165 0h1M71 462.5h1m112 0h1m75 0h1m131 0h1m19 0h1m237 0h1m95 0h1m47 0h1m31 0h1m28 0h1M76 463.5h1m5 0h1m112 0h1m36 0h1m155 0h1m130 0h1m179 0h1m1 0h1m9 0h1m44 0h1m39 0h1m34 0h1M7 464.5h1m27 0h1m82 0h1m5 0h1m127 0h1m188 0h1m34 0h1m36 0h1m5 0h1m147 0h1m0 0h1m8 0h1m117 0h1m7 0h1m31 0h1m14 0h1M108 465.5h1m167 0h1m103 0h1m75 0h1m23 0h1m1 0h1m94 0h1m37 0h1m5 0h1m33 0h1m43 0h1m41 0h1m79 0h1m1 0h1m35 0h1M107 466.5h1m4 0h1m178 0h1m41 0h1m51 0h1m44 0h1m63 0h1m24 0h1m93 0h1m104 0h1m93 0h1m22 0h1M3 467.5h1m99 0h1m66 0h1m30 0h1m3 0h1m214 0h1m172 0h1m26 0h1m74 0h1m73 0h1m33 0h1m31 0h1m15 0h1M110 468.5h1m65 0h1m137 0h1m12 0h1m75 0h1m197 0h1m45 0h1m17 0h1m17 0h1m20 0h1m4 0h1m114 0h1m6 0h1m13 0h1m12 0h1M16 469.5h1m138 0h1m76 0h1m9 0h1m5 0h1m16 0h1m30 0h1m160 0h1m109 0h1m154 0h1m36 0h1M46 470.5h1m71 0h1m15 0h1m466 0h1m5 0h1m180 0h1m17 0h1m13 0h1M120 471.5h1m35 0h1m79 0h1m100 0h1m62 0h1m39 0h1m81 0h1m6 0h1m30 0h1m35 0h1m100 0h1m17 0h1m29 0h1M23 472.5h1m161 0h1m91 0h1m98 0h1m83 0h1m152 0h1m25 0h1m99 0h1m61 0h1m28 0h1M110 473.5h1m47 0h1m44 0h1m31 0h1m172 0h1m114 0h1m150 0h1m9 0h1m77 0h1m4 0h1m16 0h1m39 0h1M115 474.5h1m9 0h1m20 0h1m5 0h1m17 0h1m2 0h1m19 0h1m43 0h1m25 0h1m11 0h1m25 0h1m23 0h1m18 0h1m25 0h1m51 0h1m46 0h1m130 0h1m46 0h1m125 0h1M35 475.5h1m125 0h1m40 0h1m17 0h1m25 0h1m144 0h1m5 0h1m0 0h1m14 0h1m51 0h1m69 0h1m133 0h1m103 0h1m83 0h1M126 476.5h1m77 0h1m31 0h1m120 0h1m86 0h1m124 0h1m34 0h1m127 0h1m30 0h1m0 0h1m11 0h1m77 0h1m5 0h1M38 477.5h1m15 0h1m9 0h1m34 0h1m289 0h1m13 0h1m71 0h1m129 0h1m2 0h1m34 0h1m43 0h1m102 0h1M40 478.5h1m78 0h1m20 0h1m48 0h1m0 0h1m167 0h1m12 0h1m56 0h1m66 0h1m64 0h1m183 0h1m89 0h1m5 0h1m1 0h1m11 0h1m9 0h1M157 479.5h1m113 0h1m0 0h1m43 0h1m15 0h1m6 0h1m60 0h1m54 0h1m0 0h1m94 0h1m38 0h1m3 0h1m23 0h1m24 0h1m1 0h1m44 0h1m93 0h1m38 0h1M118 480.5h1m96 0h1m59 0h1m5 0h1m73 0h1m10 0h1m21 0h1m37 0h1m14 0h1m20 0h1m62 0h1m89 0h1m118 0h1m61 0h1m1 0h1m46 0h1m13 0h1M26 481.5h1m109 0h1m3 0h1m11 0h1m44 0h1m34 0h1m26 0h1m1 0h1m23 0h1m61 0h1m97 0h1m38 0h1m168 0h1m5 0h1m42 0h1m91 0h1m9 0h1M75 482.5h1m98 0h1m63 0h1m268 0h1m9 0h1m113 0h1m17 0h1m146 0h1M30 483.5h1m51 0h1m0 0h1m0 0h1m89 0h1m159 0h1m138 0h1m9 0h1m24 0h1m43 0h1m86 0h1m16 0h1m51 0h1m30 0h1m72 0h1m8 0h1m22 0h1M21 484.5h1m105 0h1m38 0h1m101 0h1m141 0h1m13 0h1m10 0h1m76 0h1m13 0h1m69 0h1m6 0h1m77 0h1m37 0h1m2 0h1m94 0h1m11 0h1m19 0h1m10 0h1M43 485.5h1m56 0h1m43 0h1m83 0h1m4 0h1m36 0h1m5 0h1m72 0h1m22 0h1m253 0h1m136 0h1m75 0h1m5 0h1M4 486.5h1m104 0h1m3 0h1m51 0h1m30 0h1m49 0h1m76 0h1m89 0h1m41 0h1m70 0h1m111 0h1m81 0h1m35 0h1m84 0h1m5 0h1M9 487.5h1m98 0h1m72 0h1m6 0h1m115 0h1m60 0h1m69 0h1m85 0h1m4 0h1m2 0h1m68 0h1m103 0h1m31 0h1m120 0h1m7 0h1M42 488.5h1m24 0h1m17 0h1m193 0h1m38 0h1m6 0h1m93 0h1m114 0h1m38 0h1m60 0h1m19 0h1m9 0h1m189 0h1m0 0h1M73 489.5h1m20 0h1m13 0h1m50 0h1m12 0h1m121 0h1m16 0h1m148 0h1m85 0h1m27 0h1m28 0h1m23 0h1m10 0h1m73 0h1m28 0h1m90 0h1M18 490.5h1m59 0h1m15 0h1m332 0h1m22 0h1m148 0h1m69 0h1m25 0h1m98 0h1M2 491.5h1m111 0h1m114 0h1m98 0h1m12 0h1m85 0h1m49 0h1m36 0h1m22 0h1m191 0h1m95 0h1m36 0h1M11 492.5h1m6 0h1m128 0h1m114 0h1m34 0h1m35 0h1m43 0h1m5 0h1m76 0h1m156 0h1m35 0h1M12 493.5h1m500 0h1m192 0h1m94 0h1m28 0h1M12 494.5h1m196 0h1m18 0h1m4 0h1m4 0h1m62 0h1m6 0h1m24 0h1m133 0h1m21 0h1m175 0h1m20 0h1m46 0h1m45 0h1M68 495.5h1m24 0h1m19 0h1m73 0h1m39 0h1m75 0h1m39 0h1m83 0h1m19 0h1m53 0h1m11 0h1m8 0h1m15 0h1m17 0h1m4 0h1m0 0h1m163 0h1m125 0h1M12 496.5h1m107 0h1m106 0h1m0 0h1m179 0h1m77 0h1m65 0h1m90 0h1m44 0h1m169 0h1M37 497.5h1m10 0h1m2 0h1m10 0h1m34 0h1m22 0h1m81 0h1m6 0h1m207 0h1m61 0h1m73 0h1m110 0h1m30 0h1m57 0h1m33 0h1M3 498.5h1m114 0h1m15 0h1m19 0h1m4 0h1m116 0h1m30 0h1m3 0h1m95 0h1m31 0h1m262 0h1m151 0h1M16 499.5h1m101 0h1m4 0h1m98 0h1m225 0h1m87 0h1m105 0h1m75 0h1M28 500.5h1m25 0h1m56 0h1m23 0h1m19 0h1m6 0h1m86 0h1m49 0h1m75 0h1m68 0h1m30 0h1m179 0h1m40 0h1m42 0h1m68 0h1M177 501.5h1m6 0h1m7 0h1m76 0h1m27 0h1m74 0h1m25 0h1m17 0h1m16 0h1m88 0h1m78 0h1m31 0h1m6 0h1m17 0h1m32 0h1m34 0h1m1 0h1m58 0h1M174 502.5h1m45 0h1m45 0h1m24 0h1m100 0h1m70 0h1m296 0h1M3 503.5h1m16 0h1m85 0h1m40 0h1m73 0h1m13 0h1m51 0h1m3 0h1m20 0h1m55 0h1m101 0h1m33 0h1m191 0h1m63 0h1M204 504.5h1m3 0h1m5 0h1m89 0h1m60 0h1m114 0h1m3 0h1m8 0h1m110 0h1m6 0h1m4 0h1m45 0h1m51 0h1m40 0h1m59 0h1m6 0h1m39 0h1M93 505.5h1m57 0h1m47 0h1m67 0h1m102 0h1m7 0h1m61 0h1m22 0h1m76 0h1m123 0h1m18 0h1m7 0h1m47 0h1m19 0h1m87 0h1M133 506.5h1m30 0h1m10 0h1m26 0h1m91 0h1m94 0h1m125 0h1m21 0h1m11 0h1m3 0h1m118 0h1m64 0h1m10 0h1m45 0h1M32 507.5h1m21 0h1m46 0h1m9 0h1m2 0h1m152 0h1m136 0h1m46 0h1m117 0h1m53 0h1m96 0h1m6 0h1m6 0h1m85 0h1m32 0h1M40 508.5h1m43 0h1m19 0h1m30 0h1m145 0h1m230 0h1m47 0h1m12 0h1m34 0h1m7 0h1m54 0h1m16 0h1m4 0h1m74 0h1m90 0h1M38 509.5h1m34 0h1m27 0h1m19 0h1m114 0h1m25 0h1m46 0h1m147 0h1m21 0h1m32 0h1m70 0h1m3 0h1m133 0h1m17 0h1m98 0h1M143 510.5h1m54 0h1m53 0h1m47 0h1m4 0h1m52 0h1m48 0h1m23 0h1m2 0h1m17 0h1m33 0h1m51 0h1m7 0h1m85 0h1m37 0h1m120 0h1M6 511.5h1m31 0h1m241 0h1m27 0h1m6 0h1m78 0h1m168 0h1m26 0h1m30 0h1m170 0h1M48 512.5h1m78 0h1m20 0h1m217 0h1m13 0h1m2 0h1m105 0h1m13 0h1m1 0h1m12 0h1m93 0h1m35 0h1m4 0h1m1 0h1m12 0h1m93 0h1m44 0h1m16 0h1m33 0h1M3 513.5h1m221 0h1m18 0h1m19 0h1m84 0h1m6 0h1m81 0h1m114 0h1m2 0h1m94 0h1m92 0h1m101 0h1M23 514.5h1m14 0h1m115 0h1m48 0h1m18 0h1m14 0h1m9 0h1m18 0h1m124 0h1m8 0h1m144 0h1m129 0h1m151 0h1M128 515.5h1m2 0h1m5 0h1m97 0h1m19 0h1m72 0h1m101 0h1m17 0h1m1 0h1m6 0h1m5 0h1m13 0h1m86 0h1m43 0h1m99 0h1m57 0h1m85 0h1M29 516.5h1m97 0h1m14 0h1m15 0h1m95 0h1m4 0h1m9 0h1m23 0h1m83 0h1m80 0h1m136 0h1m158 0h1m1 0h1m13 0h1m48 0h1M19 517.5h1m38 0h1m75 0h1m77 0h1m150 0h1m60 0h1m5 0h1m26 0h1m65 0h1m54 0h1m48 0h1m122 0h1m0 0h1m74 0h1M55 518.5h1m22 0h1m12 0h1m30 0h1m26 0h1m36 0h1m139 0h1m28 0h1m52 0h1m66 0h1m7 0h1m4 0h1m141 0h1m54 0h1m72 0h1m75 0h1M20 519.5h1m66 0h1m102 0h1m13 0h1m5 0h1m34 0h1m5 0h1m39 0h1m9 0h1m78 0h1m71 0h1m110 0h1m4 0h1m101 0h1m15 0h1m64 0h1m37 0h1m34 0h1m24 0h1M210 520.5h1m3 0h1m80 0h1m28 0h1m84 0h1m53 0h1m66 0h1m21 0h1m17 0h1m30 0h1m15 0h1m191 0h1M66 521.5h1m6 0h1m52 0h1m49 0h1m7 0h1m52 0h1m24 0h1m7 0h1m91 0h1m108 0h1m11 0h1m46 0h1m122 0h1m20 0h1m115 0h1m49 0h1M36 522.5h1m65 0h1m121 0h1m52 0h1m85 0h1m49 0h1m36 0h1m21 0h1m43 0h1m19 0h1m21 0h1m25 0h1m59 0h1m18 0h1M32 523.5h1m118 0h1m102 0h1m94 0h1m32 0h1m63 0h1m31 0h1m25 0h1m71 0h1m3 0h1m0 0h1m214 0h1m38 0h1m25 0h1M33 524.5h1m41 0h1m44 0h1m23 0h1m48 0h1m165 0h1m67 0h1m10 0h1m25 0h1m41 0h1m16 0h1m82 0h1m13 0h1m9 0h1m2 0h1m43 0h1m91 0h1m26 0h1m36 0h1M44 525.5h1m17 0h1m45 0h1m43 0h1m68 0h1m4 0h1m37 0h1m63 0h1m51 0h1m0 0h1m40 0h1m34 0h1m79 0h1m71 0h1m84 0h1m58 0h1m68 0h1m3 0h1m5 0h1m11 0h1M77 526.5h1m2 0h1m37 0h1m74 0h1m15 0h1m19 0h1m53 0h1m92 0h1m24 0h1m71 0h1m14 0h1m76 0h1m8 0h1m33 0h1m16 0h1m36 0h1" stroke="#9c9c9c" stroke-width="1" fill="none" shape-rendering="crispEdges"/><defs><radialGradient id="tg" gradientUnits="userSpaceOnUse" cx="640" cy="480" r="420"><stop offset="0.24" stop-color="#9294a8"/><stop offset="0.29" stop-color="#8a8c9e"/><stop offset="0.417" stop-color="#76798d"/><stop offset="0.574" stop-color="#60627c"/><stop offset="0.721" stop-color="#4a4d6a"/><stop offset="0.848" stop-color="#424462"/><stop offset="0.917" stop-color="#3e405e"/><stop offset="1" stop-color="#3a3c5a"/></radialGradient></defs><g fill="url(#tg)" transform="translate(-1,-50)"><path d="M249.7 275.2L352.2 277.5L351.8 293.3L311 292.4L306.4 398.8L287.6 398.8L291.7 291.3L249 290.4Z"/><path d="M440.1 320.8L460.4 321.6L483.2 349.3L507.3 322.7L527.1 323L494.6 362L528.7 403.7L508.8 403.7L482.8 374.3L458.9 402.5L439 401.8L471.9 362.3Z"/><path d="M529.2 337.2L560.1 308L560.1 323.9L584.8 324.2L584.8 336.1L560.1 336.1L559.7 376.5C559.7 389 562.5 394.3 570 394.3C576.5 394.3 583 391.5 589 386.9L589 402.4C581 405.8 573 407.2 565.1 406.6C550 405 543 396 543 378.2L543.4 337.2Z"/><path fill-rule="evenodd" d="M433.8 357.9L433.6 364.4L377.0 363.0Q377.6 375.6 384.1 381.8Q390.6 388.0 402.3 388.3Q409.4 388.5 416.3 387.1Q423.3 385.7 430.3 382.2L430.0 397.2Q423.0 400.1 415.6 401.5Q408.1 402.9 400.5 402.7Q381.5 402.2 370.6 390.7Q359.7 379.3 360.0 360.2Q360.3 340.4 371.1 329.1Q381.8 317.8 399.7 318.2Q415.7 318.6 424.9 329.3Q434.1 340.0 433.8 357.9ZM417.7 353.6Q417.7 344.3 412.8 338.7Q407.8 333.1 399.6 332.9Q390.1 332.7 384.4 337.8Q378.7 343.0 377.6 352.7Z"/></g></svg>
<svg class="a" style="left:860.3px;top:50px;overflow:hidden" width="12" height="12" viewBox="0 0 12 12"><path d="M1.5 0L12 10.5M5.5 0L12 6.5M9.5 0L12 2.5" stroke="#8a8a8a" stroke-width="1.2"/><path d="M3.2 0L12 8.8M7.2 0L12 4.8" stroke="#000" stroke-width="1.2"/></svg><svg class="a" style="left:856px;top:71px" width="15" height="15" viewBox="0 0 15 15"><g transform="translate(0.9,0.9)"><rect x="0" y="0" width="14" height="14" rx="3" fill="#0b0b0b"/><path d="M7 3.8V10.2M3.8 7H10.2" stroke="#4e4e4e" stroke-width="1.5"/></g></svg><svg class="a" style="left:-2px;top:72px" width="15" height="15" viewBox="0 0 15 15"><g transform="translate(0.6,0.3)"><rect x="0" y="0" width="14" height="14" rx="3" fill="#0b0b0b"/><path d="M7 3.8V10.2M3.8 7H10.2" stroke="#4e4e4e" stroke-width="1.5"/></g></svg>
<div class="t tw" style="left:12.3px;top:53px;text-shadow:0 0 1px #000">Frame:<span style="letter-spacing:0.66px">1</span> Ve:<span style="letter-spacing:0.66px">659</span> Fa:<span style="letter-spacing:0.66px">683</span> La:<span style="letter-spacing:0.66px">1</span> Mem:<span style="letter-spacing:0.66px">11</span>.<span style="letter-spacing:0.66px">84</span>M (<span style="letter-spacing:0.66px">12</span>.<span style="letter-spacing:0.66px">70</span>M, peak <span style="letter-spacing:0.66px">35</span>.<span style="letter-spacing:0.66px">19</span>M) Time:<span style="letter-spacing:0.66px">00</span>:<span style="letter-spacing:0.66px">01</span>.<span style="letter-spacing:0.66px">88</span></div><div class="a" style="left:1px;top:577px;width:871px;height:1px;background:#808080;"></div>
<div class="a" style="left:1px;top:578px;width:871px;height:25px;background:#727272;"></div>
<div class="a" style="left:1px;top:603px;width:871px;height:1.5px;background:#141414;"></div>
<svg class="a" style="left:0px;top:591px" width="12" height="12" viewBox="0 0 12 12"><path d="M0 1.5L10.5 12M0 5.5L6.5 12M0 9.5L2.5 12" stroke="#9a9a9a" stroke-width="1.2"/><path d="M0 3.2L8.8 12M0 7.2L4.8 12" stroke="#3a3a3a" stroke-width="1.2"/></svg>
<div class="w dk" style="left:8px;top:581px;width:30px;height:20px;"></div><svg class="a" style="left:11px;top:584px" width="16" height="15" viewBox="0 0 16 15"><g transform="translate(0.3,0)"><defs><linearGradient id="sky" x1="0" y1="0" x2="0" y2="1"><stop offset="0" stop-color="#d98f8c"/><stop offset="1" stop-color="#f3c2b6"/></linearGradient></defs><rect x=".4" y=".4" width="14.2" height="12.6" rx=".8" fill="#fff" stroke="#161616" stroke-width=".8"/><rect x=".9" y=".9" width="13.2" height="5.2" fill="url(#sky)"/><rect x="8.6" y="2.2" width="1.9" height="1.9" fill="#fff"/><path d="M.9 5.3L2 4.6L2.6 5.2L3.4 4.3L4.2 5.3L6 5.1L7.5 5.5L9.5 5.2L11 5.5L12.4 5L14.1 5.4V6.6H.9Z" fill="#161616"/><rect x=".9" y="6.4" width="13.2" height="2.7" fill="#7e78b8"/><rect x="8.4" y="6.6" width="2.2" height="2.2" fill="#a9a4d2"/><rect x="1.8" y="10.3" width="1.2" height="1.2" fill="#e01818"/><path d="M4 10.9H13" stroke="#9a9a9a" stroke-width=".8"/></g></svg><svg class="a" style="left:27px;top:585px" width="7" height="14" viewBox="0 0 7 14"><g transform="translate(0.3,0.1)"><path d="M3 0L6 4.8H0Z" fill="#b4b4b4"/><path d="M0 7.3H6L3 12.2Z" fill="#b4b4b4"/></g></svg>
<svg class="a" style="left:45px;top:585px" width="12" height="12" viewBox="0 0 12 12"><g transform="translate(0.9,0.9)"><circle cx="5.5" cy="5.5" r="4.1" fill="#6c6c6c" stroke="#bdbdbd" stroke-width="1.6"/><circle cx="5.5" cy="5.5" r="5.2" fill="none" stroke="rgba(50,50,50,.5)" stroke-width=".6"/><path d="M3.2 5.6H7.8" stroke="#d6d6d6" stroke-width="1.5"/></g></svg>
<div class="t " style="left:70.2px;top:585px;">View</div><div class="t " style="left:109.4px;top:585px;">Image</div>
<div class="w " style="left:153px;top:581px;width:212px;height:20px;"><div class="dk" style="left:0;top:0;width:30px;height:18px"></div><div class="dv" style="left:30px"></div><div class="tx" style="left:31px;top:0;width:119px;height:18px"></div><div class="dv" style="left:150px"></div><div class="bt" style="left:151px;top:0;width:19px;height:18px"></div><div class="dv" style="left:170px"></div><div class="bt" style="left:171px;top:0;width:19px;height:18px"></div><div class="dv" style="left:190px"></div><div class="bt" style="left:191px;top:0;width:20px;height:18px"></div></div><svg class="a" style="left:158px;top:583px" width="14" height="16.5" viewBox="0 0 14 16.5"><g transform="translate(0.3,0)"><defs><linearGradient id="sk2" x1="0" y1="0" x2="0" y2="1"><stop offset="0" stop-color="#e2a098"/><stop offset="1" stop-color="#f4cabc"/></linearGradient></defs><path d="M3.8 .5H12.5V15H.5V3.8Z" fill="#fff" stroke="#111" stroke-width="1" stroke-linejoin="round"/><path d="M4.8 2H11.2V8.8H1.8V5H4.8Z" fill="url(#sk2)"/><rect x="7.7" y="3.3" width="2.1" height="2.1" fill="#fff"/><path d="M1.8 8.3L3 7.9L4.4 8.7L6 8.5L7.4 8.8L8.8 8.1L10 8.7L11.2 8.5V9.9H1.8Z" fill="#111"/><rect x="1.8" y="9.8" width="9.4" height="3.8" fill="#a6a3d2"/><rect x="7.5" y="10" width="2.3" height="2.8" fill="#c6c4e4"/><path d="M.5 3.8L3.8 .5V3.8Z" fill="#fff" stroke="#111" stroke-width=".7" stroke-linejoin="round"/></g></svg><svg class="a" style="left:174px;top:585px" width="7" height="14" viewBox="0 0 7 14"><g transform="translate(0,0.1)"><path d="M3 0L6 4.8H0Z" fill="#b4b4b4"/><path d="M0 7.3H6L3 12.2Z" fill="#b4b4b4"/></g></svg><div class="t " style="left:189.5px;top:585px;">Render Result</div><div class="t " style="left:310.5px;top:585px;">F</div><svg class="a" style="left:327px;top:584px" width="14" height="14" viewBox="0 0 14 14"><g transform="translate(0.8,0.5)"><path d="M6.5 1V12M1 6.5H12" stroke="#1a1a1a" stroke-width="3.6" stroke-linecap="butt"/><path d="M6.5 1.8V11.2M1.8 6.5H11.2" stroke="#fff" stroke-width="1.9"/></g></svg><svg class="a" style="left:347px;top:584px" width="14" height="14" viewBox="0 0 14 14"><g transform="translate(0.3,0.3)"><path d="M1.6 1.6L11.4 11.4M11.4 1.6L1.6 11.4" stroke="#1a1a1a" stroke-width="3.6"/><path d="M2.3 2.3L10.7 10.7M10.7 2.3L2.3 10.7" stroke="#fff" stroke-width="1.9"/></g></svg>
<div class="w dk" style="left:370px;top:581px;width:111px;height:20px;"></div><svg class="a" style="left:374px;top:583px" width="13" height="15.5" viewBox="0 0 13 15.5"><defs><linearGradient id="sk2" x1="0" y1="0" x2="0" y2="1"><stop offset="0" stop-color="#e2a098"/><stop offset="1" stop-color="#f4cabc"/></linearGradient></defs><path d="M3.8 .5H12.5V15H.5V3.8Z" fill="#fff" stroke="#111" stroke-width="1" stroke-linejoin="round"/><path d="M4.8 2H11.2V8.8H1.8V5H4.8Z" fill="url(#sk2)"/><rect x="7.7" y="3.3" width="2.1" height="2.1" fill="#fff"/><path d="M1.8 8.3L3 7.9L4.4 8.7L6 8.5L7.4 8.8L8.8 8.1L10 8.7L11.2 8.5V9.9H1.8Z" fill="#111"/><rect x="1.8" y="9.8" width="9.4" height="3.8" fill="#a6a3d2"/><rect x="7.5" y="10" width="2.3" height="2.8" fill="#c6c4e4"/><path d="M.5 3.8L3.8 .5V3.8Z" fill="#fff" stroke="#111" stroke-width=".7" stroke-linejoin="round"/></svg><div class="t tw" style="left:391px;top:585.0px;">View</div><svg class="a" style="left:467px;top:585px" width="7" height="14" viewBox="0 0 7 14"><g transform="translate(0.5,0.1)"><path d="M3 0L6 4.8H0Z" fill="#b4b4b4"/><path d="M0 7.3H6L3 12.2Z" fill="#b4b4b4"/></g></svg>
<div class="w dk" style="left:486px;top:581px;width:240px;height:20px;"><div class="dv" style="left:62px"></div><div class="dv" style="left:159px"></div></div>
<div class="t tw" style="left:491.5px;top:585px;">Slot <span class="d">1</span></div><svg class="a" style="left:537px;top:585px" width="7" height="14" viewBox="0 0 7 14"><g transform="translate(0.5,0.1)"><path d="M3 0L6 4.8H0Z" fill="#b4b4b4"/><path d="M0 7.3H6L3 12.2Z" fill="#b4b4b4"/></g></svg>
<div class="t tw" style="left:554.5px;top:585px;">RenderLayer</div><svg class="a" style="left:633px;top:585px" width="7" height="14" viewBox="0 0 7 14"><g transform="translate(0.5,0.1)"><path d="M3 0L6 4.8H0Z" fill="#b4b4b4"/><path d="M0 7.3H6L3 12.2Z" fill="#b4b4b4"/></g></svg>
<div class="t tw" style="left:650.5px;top:585px;">Combined</div><svg class="a" style="left:713px;top:585px" width="7" height="14" viewBox="0 0 7 14"><g transform="translate(0.5,0.1)"><path d="M3 0L6 4.8H0Z" fill="#b4b4b4"/><path d="M0 7.3H6L3 12.2Z" fill="#b4b4b4"/></g></svg>
<div class="w dk" style="left:731px;top:581px;width:79.5px;height:20px;"><div class="sel" style="left:0;top:0;width:19px;height:18px"></div><div class="dv" style="left:19px"></div><div class="dv" style="left:38.5px"></div><div class="dv" style="left:58.5px"></div></div>
<svg class="a" style="left:734px;top:584px" width="14" height="14" viewBox="0 0 14 14"><g transform="translate(0.3,0.7)"><rect x="0" y="0" width="13" height="12.5" fill="#fff" stroke="#161616" stroke-width="1"/><rect x="1" y="1" width="2.6" height="2.6" fill="#2a7aa8"/><rect x="6.5" y="1" width="2.6" height="2.6" fill="#d81838"/><rect x="3.8" y="3.6" width="2.6" height="2.6" fill="#d81838"/><rect x="9.4" y="3.6" width="2.6" height="2.6" fill="#4aa890"/><rect x="1" y="6.2" width="2.6" height="2.6" fill="#e08818"/><rect x="6.5" y="6.2" width="2.6" height="2.6" fill="#a01830"/><rect x="3.8" y="8.8" width="2.6" height="2.6" fill="#c88050"/><rect x="9.4" y="8.8" width="2.6" height="2.6" fill="#a8b830"/><rect x="9.4" y="1" width="2.6" height="2.6" fill="#fff"/></g></svg><svg class="a" style="left:754px;top:584px" width="14" height="14" viewBox="0 0 14 14"><g transform="translate(0,0.7)"><g opacity=".82"><path d="M0 0H13L0 12.5Z" fill="#e6e6e6"/><path d="M13 0V12.5H0Z" fill="#5c5c5c"/><rect x="1" y="1" width="2.4" height="2.4" fill="#2a7aa8"/><rect x="6" y="1" width="2.6" height="2.4" fill="#d81838"/><rect x="3.5" y="3.5" width="2.5" height="2.5" fill="#a01830"/><rect x="1" y="6" width="2.4" height="2.6" fill="#e08818"/><rect x="8.5" y="3.5" width="2" height="2" fill="#6a6a6a"/><rect x="6" y="6.5" width="2.5" height="2.5" fill="#4e4e4e"/><rect x="9" y="8.5" width="2.5" height="2.5" fill="#6a6a6a"/></g></g></svg><svg class="a" style="left:773px;top:584px" width="15" height="14" viewBox="0 0 15 14"><g transform="translate(0.7,0.5)"><defs><linearGradient id="bwg" x1="0" y1="0" x2="1" y2="1"><stop offset="0" stop-color="#9a9a9a"/><stop offset="1" stop-color="#d8d8d8"/></linearGradient></defs><rect x=".5" y=".5" width="12.5" height="12" fill="#2c2c2c" stroke="#1a1a1a"/><path d="M1 1H12.5L1 12Z" fill="url(#bwg)"/></g></svg><svg class="a" style="left:793px;top:584px" width="15" height="15" viewBox="0 0 15 15"><g transform="translate(0.3,0)"><rect x=".5" y=".5" width="13" height="12.5" fill="#3e3e3e" stroke="#2a2a2a"/><rect x="2.5" y="2.5" width="5.5" height="5.5" fill="#8a8a8a"/><rect x="5.5" y="5.5" width="5.5" height="5.5" fill="#c2c2c2"/></g></svg><div class="a" style="left:1px;top:604.5px;width:871px;height:55.5px;background:#727272;"></div>
<div class="a" style="left:503px;top:604.5px;width:369px;height:55.5px;background:#454545;"></div>
<div class="a" style="left:17.7px;top:604.5px;width:1px;height:55.5px;background:#626262"></div><div class="a" style="left:43.3px;top:604.5px;width:1px;height:55.5px;background:#626262"></div><div class="a" style="left:68.8px;top:604.5px;width:1px;height:55.5px;background:#626262"></div><div class="a" style="left:94.4px;top:604.5px;width:1px;height:55.5px;background:#626262"></div><div class="a" style="left:120.0px;top:604.5px;width:1px;height:55.5px;background:#626262"></div><div class="a" style="left:145.5px;top:604.5px;width:1px;height:55.5px;background:#626262"></div><div class="a" style="left:171.1px;top:604.5px;width:1px;height:55.5px;background:#626262"></div><div class="a" style="left:196.7px;top:604.5px;width:1px;height:55.5px;background:#626262"></div><div class="a" style="left:222.3px;top:604.5px;width:1px;height:55.5px;background:#626262"></div><div class="a" style="left:247.8px;top:604.5px;width:1px;height:55.5px;background:#626262"></div><div class="a" style="left:273.4px;top:604.5px;width:1px;height:55.5px;background:#626262"></div><div class="a" style="left:299.0px;top:604.5px;width:1px;height:55.5px;background:#626262"></div><div class="a" style="left:324.5px;top:604.5px;width:1px;height:55.5px;background:#626262"></div><div class="a" style="left:350.1px;top:604.5px;width:1px;height:55.5px;background:#626262"></div><div class="a" style="left:375.7px;top:604.5px;width:1px;height:55.5px;background:#626262"></div><div class="a" style="left:401.2px;top:604.5px;width:1px;height:55.5px;background:#626262"></div><div class="a" style="left:426.8px;top:604.5px;width:1px;height:55.5px;background:#626262"></div><div class="a" style="left:452.4px;top:604.5px;width:1px;height:55.5px;background:#626262"></div><div class="a" style="left:478.0px;top:604.5px;width:1px;height:55.5px;background:#626262"></div><div class="a" style="left:503.5px;top:604.5px;width:1px;height:55.5px;background:#3b3b3b"></div><div class="a" style="left:529.1px;top:604.5px;width:1px;height:55.5px;background:#3b3b3b"></div><div class="a" style="left:554.7px;top:604.5px;width:1px;height:55.5px;background:#3b3b3b"></div><div class="a" style="left:580.2px;top:604.5px;width:1px;height:55.5px;background:#3b3b3b"></div><div class="a" style="left:605.8px;top:604.5px;width:1px;height:55.5px;background:#3b3b3b"></div><div class="a" style="left:631.4px;top:604.5px;width:1px;height:55.5px;background:#3b3b3b"></div><div class="a" style="left:657.0px;top:604.5px;width:1px;height:55.5px;background:#3b3b3b"></div><div class="a" style="left:682.5px;top:604.5px;width:1px;height:55.5px;background:#3b3b3b"></div><div class="a" style="left:708.1px;top:604.5px;width:1px;height:55.5px;background:#3b3b3b"></div><div class="a" style="left:733.7px;top:604.5px;width:1px;height:55.5px;background:#3b3b3b"></div><div class="a" style="left:759.2px;top:604.5px;width:1px;height:55.5px;background:#3b3b3b"></div><div class="a" style="left:784.8px;top:604.5px;width:1px;height:55.5px;background:#3b3b3b"></div><div class="a" style="left:810.4px;top:604.5px;width:1px;height:55.5px;background:#3b3b3b"></div><div class="a" style="left:835.9px;top:604.5px;width:1px;height:55.5px;background:#3b3b3b"></div><div class="a" style="left:861.5px;top:604.5px;width:1px;height:55.5px;background:#3b3b3b"></div>
<div class="a" style="left:1px;top:660px;width:871px;height:18px;background:#727272;"></div>
<div class="a" style="left:4px;top:661px;width:863px;height:13px;box-sizing:border-box;border:1px solid #3a3a3a;border-radius:7px;background:linear-gradient(#5e5e5e,#666)"></div>
<div class="a" style="left:192.5px;top:661px;width:674.5px;height:13px;box-sizing:border-box;border:1px solid #3a3a3a;border-radius:7px;background:linear-gradient(#6e6e6e,#8e8e8e)"></div>
<div class="a" style="left:196px;top:663.5px;width:8px;height:8px;border-radius:4px;background:#5c5c5c"></div>
<div class="a" style="left:856.5px;top:663.5px;width:8px;height:8px;border-radius:4px;background:#5c5c5c"></div>
<div class="t " style="left:14.4px;top:660.5px;font-size:11.5px;letter-spacing:.35px">60</div>
<div class="t " style="left:64.6px;top:660.5px;font-size:11.5px;letter-spacing:.35px">80</div>
<div class="t " style="left:111.6px;top:660.5px;font-size:11.5px;letter-spacing:.35px">100</div>
<div class="t " style="left:162.1px;top:660.5px;font-size:11.5px;letter-spacing:.35px">120</div>
<div class="t " style="left:212.7px;top:660.5px;font-size:11.5px;letter-spacing:.35px">140</div>
<div class="t " style="left:263.2px;top:660.5px;font-size:11.5px;letter-spacing:.35px">160</div>
<div class="t " style="left:313.8px;top:660.5px;font-size:11.5px;letter-spacing:.35px">180</div>
<div class="t " style="left:364.3px;top:660.5px;font-size:11.5px;letter-spacing:.35px">200</div>
<div class="t " style="left:414.8px;top:660.5px;font-size:11.5px;letter-spacing:.35px">220</div>
<div class="t " style="left:465.4px;top:660.5px;font-size:11.5px;letter-spacing:.35px">240</div>
<div class="t " style="left:515.9px;top:660.5px;font-size:11.5px;letter-spacing:.35px">260</div>
<div class="t " style="left:566.5px;top:660.5px;font-size:11.5px;letter-spacing:.35px">280</div>
<div class="t " style="left:617.0px;top:660.5px;font-size:11.5px;letter-spacing:.35px">300</div>
<div class="t " style="left:667.5px;top:660.5px;font-size:11.5px;letter-spacing:.35px">320</div>
<div class="t " style="left:718.1px;top:660.5px;font-size:11.5px;letter-spacing:.35px">340</div>
<div class="t " style="left:768.6px;top:660.5px;font-size:11.5px;letter-spacing:.35px">360</div>
<div class="t " style="left:819.2px;top:660.5px;font-size:11.5px;letter-spacing:.35px">380</div>
<svg class="a" style="left:860px;top:605px;overflow:hidden" width="12" height="12" viewBox="0 0 12 12"><path d="M1.5 0L12 10.5M5.5 0L12 6.5M9.5 0L12 2.5" stroke="#9a9a9a" stroke-width="1.2"/><path d="M3.2 0L12 8.8M7.2 0L12 4.8" stroke="#3a3a3a" stroke-width="1.2"/></svg><div class="a" style="left:1px;top:678px;width:871px;height:1px;background:#858585;"></div>
<div class="a" style="left:1px;top:679px;width:871px;height:25px;background:#727272;"></div>
<div class="a" style="left:0px;top:704px;width:1279px;height:2px;background:#04060c;"></div>
<svg class="a" style="left:0px;top:692px" width="12" height="12" viewBox="0 0 12 12"><path d="M0 1.5L10.5 12M0 5.5L6.5 12M0 9.5L2.5 12" stroke="#9a9a9a" stroke-width="1.2"/><path d="M0 3.2L8.8 12M0 7.2L4.8 12" stroke="#3a3a3a" stroke-width="1.2"/></svg>
<div class="w dk" style="left:9px;top:681px;width:30px;height:20px;"></div><svg class="a" style="left:12px;top:683px" width="16" height="16" viewBox="0 0 16 16"><g transform="translate(0.4,0.4)"><defs><radialGradient id="ckg" cx="40%" cy="35%" r="70%"><stop offset="0" stop-color="#fff"/><stop offset="1" stop-color="#cacaca"/></radialGradient></defs><circle cx="7.5" cy="7.5" r="6.6" fill="url(#ckg)" stroke="#161616" stroke-width="1.1"/><path d="M7.3 7.4L10.3 3.9" stroke="#3a3a3a" stroke-width="1.1"/><path d="M7.2 7.6L9.6 10.2" stroke="#d80c18" stroke-width="1.6"/><path d="M7.5 2.6v.7M7.5 11.7v.7M2.6 7.5h.7M11.7 7.5h.7" stroke="#9a9a9a" stroke-width=".7"/></g></svg><svg class="a" style="left:28px;top:685px" width="7" height="14" viewBox="0 0 7 14"><g transform="translate(0.3,0.1)"><path d="M3 0L6 4.8H0Z" fill="#b4b4b4"/><path d="M0 7.3H6L3 12.2Z" fill="#b4b4b4"/></g></svg>
<svg class="a" style="left:46px;top:686px" width="12" height="12" viewBox="0 0 12 12"><g transform="translate(0.5,0.0)"><circle cx="5.5" cy="5.5" r="4.1" fill="#6c6c6c" stroke="#bdbdbd" stroke-width="1.6"/><circle cx="5.5" cy="5.5" r="5.2" fill="none" stroke="rgba(50,50,50,.5)" stroke-width=".6"/><path d="M3.2 5.6H7.8" stroke="#d6d6d6" stroke-width="1.5"/></g></svg>
<div class="t " style="left:70.5px;top:685px;">View</div><div class="t " style="left:110.3px;top:685px;">Marker</div><div class="t " style="left:160.3px;top:685px;">Frame</div><div class="t " style="left:207.4px;top:685px;">Playback</div>
<div class="w bt" style="left:265.5px;top:681px;width:20px;height:20px;"></div><svg class="a" style="left:268px;top:684px" width="15" height="15" viewBox="0 0 15 15"><g transform="translate(0.5,0)"><circle cx="7" cy="7" r="6.3" fill="#f4f4f4" stroke="#2a2a2a" stroke-width="1"/><path d="M7 7V1.6A5.4 5.4 0 0 1 12.4 7Z" fill="#f0900c"/><path d="M7 7V1.6A5.4 5.4 0 0 1 12.4 7Z" fill="none" stroke="#7a4400" stroke-width=".5"/><path d="M7 7L9.8 10.6" stroke="#f0900c" stroke-width="1.2"/></g></svg>
<div class="w nm" style="left:290.5px;top:681px;width:227px;height:20px;"><div class="dv" style="left:116px"></div></div>
<div class="t " style="left:290.5px;top:685px;width:116px;text-align:center">Start: <span class="d">1</span></div><div class="t " style="left:407px;top:685px;width:110px;text-align:center">End: <span class="d">250</span></div>
<svg class="a" style="left:297px;top:688px" width="5" height="6" viewBox="0 0 5 6"><path d="M4 0V6L0 3Z" fill="#6a6a6a"/></svg><svg class="a" style="left:396px;top:688px" width="5" height="6" viewBox="0 0 5 6"><path d="M0 0V6L4 3Z" fill="#6a6a6a"/></svg><svg class="a" style="left:413px;top:688px" width="6" height="7" viewBox="0 0 6 7"><g transform="translate(0.5,0)"><path d="M4 0V6L0 3Z" fill="#6a6a6a"/></g></svg><svg class="a" style="left:506px;top:688px" width="5" height="6" viewBox="0 0 5 6"><path d="M0 0V6L4 3Z" fill="#6a6a6a"/></svg>
<div class="w nm" style="left:523.5px;top:681px;width:89px;height:20px;"></div>
<div class="t " style="left:523.5px;top:685px;width:89px;text-align:center"><span class="d">1</span></div><svg class="a" style="left:530px;top:688px" width="5" height="6" viewBox="0 0 5 6"><path d="M4 0V6L0 3Z" fill="#6a6a6a"/></svg><svg class="a" style="left:601px;top:688px" width="5" height="6" viewBox="0 0 5 6"><path d="M0 0V6L4 3Z" fill="#6a6a6a"/></svg>
<div class="w bt" style="left:629px;top:681px;width:119px;height:20px;"><div class="dv" style="left:18.8px"></div><div class="dv" style="left:38.6px"></div><div class="dv" style="left:58.400000000000006px"></div><div class="dv" style="left:78.2px"></div><div class="dv" style="left:98.0px"></div></div>
<svg class="a" style="left:630px;top:684px" width="17" height="15" viewBox="0 0 17 15"><g transform="translate(0.9,0)"><rect x="1" y="2" width="2.4" height="10" fill="#fff" stroke="#1a1a1a" stroke-width="1" stroke-linejoin="round"/><path d="M9 2.5V11.5L4 7Z" fill="#fff" stroke="#1a1a1a" stroke-width="1" stroke-linejoin="round"/><path d="M14 2.5V11.5L9 7Z" fill="#fff" stroke="#1a1a1a" stroke-width="1" stroke-linejoin="round"/></g></svg>
<svg class="a" style="left:650px;top:684px" width="17" height="15" viewBox="0 0 17 15"><g transform="translate(0.7,0)"><path d="M8 2.5V11.5L2 7Z" fill="#fff" stroke="#1a1a1a" stroke-width="1" stroke-linejoin="round"/><path d="M14 2.5V11.5L8 7Z" fill="#fff" stroke="#1a1a1a" stroke-width="1" stroke-linejoin="round"/></g></svg>
<svg class="a" style="left:670px;top:684px" width="17" height="15" viewBox="0 0 17 15"><g transform="translate(0.5,0)"><path d="M12.5 .8V13.2L2.5 7Z" fill="#fff" stroke="#1a1a1a" stroke-width="1" stroke-linejoin="round"/></g></svg>
<svg class="a" style="left:690px;top:684px" width="17" height="15" viewBox="0 0 17 15"><g transform="translate(0.3,0)"><path d="M3.5 .8V13.2L13.5 7Z" fill="#fff" stroke="#1a1a1a" stroke-width="1" stroke-linejoin="round"/></g></svg>
<svg class="a" style="left:710px;top:684px" width="17" height="15" viewBox="0 0 17 15"><g transform="translate(0.1,0)"><path d="M2 2.5V11.5L8 7Z" fill="#fff" stroke="#1a1a1a" stroke-width="1" stroke-linejoin="round"/><path d="M8 2.5V11.5L14 7Z" fill="#fff" stroke="#1a1a1a" stroke-width="1" stroke-linejoin="round"/></g></svg>
<svg class="a" style="left:729px;top:684px" width="17" height="15" viewBox="0 0 17 15"><g transform="translate(0.9,0)"><path d="M2 2.5V11.5L7 7Z" fill="#fff" stroke="#1a1a1a" stroke-width="1" stroke-linejoin="round"/><path d="M7 2.5V11.5L12 7Z" fill="#fff" stroke="#1a1a1a" stroke-width="1" stroke-linejoin="round"/><rect x="12.6" y="2" width="2.4" height="10" fill="#fff" stroke="#1a1a1a" stroke-width="1" stroke-linejoin="round"/></g></svg>
<div class="w dk" style="left:754px;top:681px;width:111px;height:20px;"></div><div class="t tw" style="left:760px;top:685.0px;">No Sync</div><svg class="a" style="left:851px;top:685px" width="7" height="14" viewBox="0 0 7 14"><g transform="translate(0.5,0.1)"><path d="M3 0L6 4.8H0Z" fill="#b4b4b4"/><path d="M0 7.3H6L3 12.2Z" fill="#b4b4b4"/></g></svg><div class="a" style="left:872px;top:49px;width:1px;height:655px;background:#0a0a0a;"></div><div class="a" style="left:873px;top:50px;width:1px;height:654px;background:#848484;"></div>
<div class="a" style="left:874px;top:50px;width:405px;height:25px;background:#707070;"></div>
<div class="a" style="left:874px;top:75px;width:405px;height:48px;background:#747474;"></div>
<div class="a" style="left:874px;top:88px;width:390px;height:20px;background:#797979;"></div>
<div class="a" style="left:900.5px;top:75px;width:1px;height:43px;background:#2c2c2c;"></div><div class="a" style="left:901px;top:117px;width:13px;height:1px;background:#2c2c2c;"></div>
<div class="a" style="left:1204px;top:75px;width:1px;height:48px;background:#666;"></div>
<div class="a" style="left:1224px;top:75px;width:1px;height:48px;background:#666;"></div>
<div class="a" style="left:1244px;top:75px;width:1px;height:48px;background:#666;"></div>
<div class="a" style="left:874px;top:75px;width:390px;height:48px;overflow:hidden"><svg class="a" style="left:27px;top:-2px" width="11" height="11" viewBox="0 0 11 11"><g transform="translate(0.5,0.5)"><circle cx="5" cy="5" r="4" fill="#fff" stroke="#161616" stroke-width="1"/><path d="M5 2.5V7.5M2.5 5H7.5" stroke="#111" stroke-width="1.1"/></g></svg><svg class="a" style="left:40px;top:-5px" width="16" height="15" viewBox="0 0 16 15"><g opacity="1"><path d="M3 2.5H14.5L13.2 12.8H1.8Z" fill="#e8e8d8" stroke="#2a2a2a" stroke-width=".8"/><path d="M2 1H13.5L12.6 10.6H1.2Z" fill="#fff" stroke="#2a2a2a" stroke-width=".8"/><path d="M2.6 2H12.6L12 8H2Z" fill="#5f86c4"/><path d="M3 8L5.5 4.6L7.4 6.6L9 5L12 8Z" fill="#1c3050"/><rect x="6.2" y="2.6" width="2.2" height="2" fill="#fff"/><path d="M13.4 6L14.6 12.6L3 13.6" fill="none" stroke="#4aa8b8" stroke-width=".9"/></g></svg><div class="t " style="left:60.299999999999955px;top:-3px;">RenderLayers</div><div class="a" style="left:139px;top:-3px;width:1px;height:13px;background:#3a3a3a;"></div><svg class="a" style="left:148px;top:-5px" width="16" height="15" viewBox="0 0 16 15"><g opacity="0.85"><path d="M3 2.5H14.5L13.2 12.8H1.8Z" fill="#e8e8d8" stroke="#2a2a2a" stroke-width=".8"/><path d="M2 1H13.5L12.6 10.6H1.2Z" fill="#fff" stroke="#2a2a2a" stroke-width=".8"/><path d="M2.6 2H12.6L12 8H2Z" fill="#5f86c4"/><path d="M3 8L5.5 4.6L7.4 6.6L9 5L12 8Z" fill="#1c3050"/><rect x="6.2" y="2.6" width="2.2" height="2" fill="#fff"/><path d="M13.4 6L14.6 12.6L3 13.6" fill="none" stroke="#4aa8b8" stroke-width=".9"/></g></svg><svg class="a" style="left:40px;top:15px" width="16" height="16" viewBox="0 0 16 16"><g opacity="1"><defs><radialGradient id="wg" cx="40%" cy="35%" r="75%"><stop offset="0" stop-color="#a8d0f4"/><stop offset="1" stop-color="#2c62ac"/></radialGradient></defs><circle cx="8" cy="8" r="7.7" fill="rgba(190,190,215,.55)"/><circle cx="8" cy="8" r="6.6" fill="url(#wg)" stroke="#1a2c50" stroke-width=".9"/><path d="M3.2 5.2Q5 3 7.4 3.2L8.2 4.6L6.6 6.2L7.2 8.2L5.4 9.6L4.4 12.2Q2 9 3.2 5.2Z" fill="#58903a"/><path d="M9.6 5.6L12.6 4.6Q14.4 7 13.6 10L11.6 12.4L10.2 10L11 7.8Z" fill="#58903a"/><path d="M4 4.4Q6 2.4 9 2.6" stroke="rgba(255,255,255,.7)" stroke-width=".9" fill="none"/></g></svg><div class="t " style="left:60.299999999999955px;top:16.5px;">World</div><svg class="a" style="left:22px;top:37px" width="11" height="11" viewBox="0 0 11 11"><g transform="translate(0.5,0.5)"><circle cx="5" cy="5" r="4" fill="#fff" stroke="#161616" stroke-width="1"/><path d="M5 2.5V7.5M2.5 5H7.5" stroke="#111" stroke-width="1.1"/></g></svg><svg class="a" style="left:40px;top:36px" width="16" height="14" viewBox="0 0 16 14"><circle cx="4.4" cy="3.9" r="3.4" fill="#f0a030" stroke="#5a3408" stroke-width=".9"/><circle cx="4.4" cy="3.9" r="1.3" fill="#fff4d8"/><circle cx="11" cy="3.9" r="3.4" fill="#f0a030" stroke="#5a3408" stroke-width=".9"/><circle cx="11" cy="3.9" r="1.3" fill="#fff4d8"/><path d="M3 7.6H12.4V12.8H3Z" fill="#e8921c" stroke="#5a3408" stroke-width=".9"/><path d="M12.4 9.2L15.4 7.8V12.8L12.4 11.4Z" fill="#f4b048" stroke="#5a3408" stroke-width=".8"/><rect x=".6" y="9" width="2.4" height="2.6" fill="#f4b048" stroke="#5a3408" stroke-width=".7"/></svg><div class="t " style="left:60.299999999999955px;top:36.5px;">Camera</div><div class="a" style="left:110px;top:37px;width:1px;height:13px;background:#3a3a3a;"></div><svg class="a" style="left:118px;top:34px" width="18" height="16" viewBox="0 0 18 16"><g opacity=".8"><circle cx="9" cy="8" r="8.6" fill="rgba(160,160,160,.35)"/><circle cx="5.4" cy="5.4" r="3.4" fill="#9c9c9c" stroke="#c8c8c8" stroke-width="1"/><circle cx="5.4" cy="5.4" r="1.3" fill="#6e6e6e"/><circle cx="12.2" cy="5.4" r="3.4" fill="#9c9c9c" stroke="#c8c8c8" stroke-width="1"/><circle cx="12.2" cy="5.4" r="1.3" fill="#6e6e6e"/><path d="M4 9.2H13.4V14H4Z" fill="#a4a4a4" stroke="#c8c8c8" stroke-width="1"/></g></svg><svg class="a" style="left:333px;top:38px" width="14" height="10" viewBox="0 0 14 10"><path d="M.6 5Q7 -2.4 13.4 5Q7 12 .6 5Z" fill="#fff" stroke="#2a2a2a" stroke-width=".9"/><circle cx="7" cy="4.6" r="2.6" fill="#9a9a9a"/><circle cx="7" cy="4.4" r="1.4" fill="#161616"/></svg><svg class="a" style="left:355px;top:36px" width="11" height="14" viewBox="0 0 11 14"><g transform="translate(0.5,0)"><path d="M1 .8V10.6L3.4 8.4L5.2 12.4L7 11.6L5.2 7.8H8.4Z" fill="#fff" stroke="#161616" stroke-width=".9" stroke-linejoin="round"/></g></svg><svg class="a" style="left:373px;top:37px" width="16" height="15" viewBox="0 0 16 15"><g transform="translate(0,0.5)"><defs><radialGradient id="lens" cx="40%" cy="35%" r="70%"><stop offset="0" stop-color="#d8a0a0"/><stop offset=".5" stop-color="#4a3050"/><stop offset="1" stop-color="#141824"/></radialGradient></defs><path d="M2 1.6H5.4V3" fill="#e8e8e8" stroke="#161616" stroke-width=".8"/><rect x=".6" y="3" width="13.2" height="9.6" rx=".9" fill="#f2f2f2" stroke="#161616" stroke-width="1"/><rect x="1.4" y="5.2" width="11.6" height="5" fill="#3c3c3c"/><rect x="1.4" y="10.2" width="11.6" height="1.6" fill="#d8d8d8"/><rect x="2" y="3.8" width="1.3" height="1.2" fill="#e01818"/><rect x="9.8" y="3.8" width="3" height="1.1" fill="#3a4a78"/><circle cx="8.4" cy="8.4" r="3.3" fill="url(#lens)" stroke="#e8e8e8" stroke-width=".9"/><circle cx="8.4" cy="8.4" r="3.9" fill="none" stroke="#222" stroke-width=".6"/></g></svg></div>
<div class="a" style="left:1264px;top:81px;width:13px;height:20px;box-sizing:border-box;border-radius:6.5px;border:1px solid #505050;background:linear-gradient(90deg,#5a5a5a,#626262)"></div>
<div class="a" style="left:1264px;top:81px;width:13px;height:12.5px;box-sizing:border-box;border-radius:6.5px;border:1px solid #585858;background:linear-gradient(90deg,#929292,#7e7e7e)"></div>
<div class="w dk" style="left:882px;top:53px;width:30px;height:20px;"></div><svg class="a" style="left:886px;top:55px" width="15" height="16" viewBox="0 0 15 16"><g transform="translate(0,0.5)"><path d="M3.5 4V12.5H8M3.5 8H8" stroke="#a9c4e6" stroke-width="1" fill="none"/><rect x=".6" y=".6" width="7.8" height="3" rx=".6" fill="#f0a030" stroke="#5a3a08" stroke-width=".8"/><rect x="2" y="1.5" width="5" height="1.1" fill="#fff"/><rect x="7.6" y="6.5" width="6" height="3" rx=".6" fill="#e4e4e4" stroke="#2a2a2a" stroke-width=".8"/><rect x="8.8" y="7.4" width="3.6" height="1.1" fill="#fff"/><rect x="7.6" y="11" width="6" height="3" rx=".6" fill="#e4e4e4" stroke="#2a2a2a" stroke-width=".8"/><rect x="8.8" y="11.9" width="3.6" height="1.1" fill="#fff"/></g></svg><svg class="a" style="left:901px;top:57px" width="7" height="14" viewBox="0 0 7 14"><g transform="translate(0.3,0.1)"><path d="M3 0L6 4.8H0Z" fill="#b4b4b4"/><path d="M0 7.3H6L3 12.2Z" fill="#b4b4b4"/></g></svg>
<svg class="a" style="left:919px;top:57px" width="12" height="12" viewBox="0 0 12 12"><g transform="translate(0.9,0.9)"><circle cx="5.5" cy="5.5" r="4.1" fill="#6c6c6c" stroke="#bdbdbd" stroke-width="1.6"/><circle cx="5.5" cy="5.5" r="5.2" fill="none" stroke="rgba(50,50,50,.5)" stroke-width=".6"/><path d="M3.2 5.6H7.8" stroke="#d6d6d6" stroke-width="1.5"/></g></svg>
<div class="t " style="left:944px;top:57px;">View</div><div class="t " style="left:983.5px;top:57px;">Search</div>
<div class="w dk" style="left:1030.5px;top:53px;width:111px;height:20px;"></div><div class="t tw" style="left:1035.0px;top:57.0px;">All Scenes</div><svg class="a" style="left:1128px;top:57px" width="7" height="14" viewBox="0 0 7 14"><g transform="translate(0.0,0.1)"><path d="M3 0L6 4.8H0Z" fill="#b4b4b4"/><path d="M0 7.3H6L3 12.2Z" fill="#b4b4b4"/></g></svg>
<div class="w tx" style="left:1146.5px;top:53px;width:105px;height:20px;"></div><svg class="a" style="left:1149px;top:54px" width="17" height="17" viewBox="0 0 17 17"><g transform="translate(0.5,0.5)"><defs><radialGradient id="mgg" cx="40%" cy="35%" r="70%"><stop offset="0" stop-color="#f4eaea"/><stop offset="1" stop-color="#c8b8c0"/></radialGradient></defs><path d="M6.6 9.4L1.4 14.6" stroke="#2a1a08" stroke-width="3.4" stroke-linecap="round"/><path d="M6.4 9.6L1.5 14.5" stroke="#d88a28" stroke-width="2" stroke-linecap="round"/><circle cx="9.8" cy="6" r="4.8" fill="url(#mgg)" stroke="#2c2c2c" stroke-width="1.3"/><path d="M7.2 4.6A3 3 0 0 1 10.4 2.8" stroke="#fff" stroke-width="1" fill="none"/></g></svg>
<svg class="a" style="left:1267px;top:50px;overflow:hidden" width="12" height="12" viewBox="0 0 12 12"><path d="M1.5 0L12 10.5M5.5 0L12 6.5M9.5 0L12 2.5" stroke="#9a9a9a" stroke-width="1.2"/><path d="M3.2 0L12 8.8M7.2 0L12 4.8" stroke="#3a3a3a" stroke-width="1.2"/></svg>
<div class="a" style="left:873px;top:123px;width:406px;height:1.5px;background:#0c0c0c;"></div><div class="a" style="left:874px;top:124.5px;width:405px;height:25.5px;background:#707070;"></div>
<div class="a" style="left:874px;top:150px;width:405px;height:1px;background:#868686;"></div>
<div class="a" style="left:874px;top:151px;width:405px;height:553px;background:#727272;"></div>
<div class="a" style="left:874px;top:700.5px;width:405px;height:1px;background:#868686;"></div>
<div class="w dk" style="left:882px;top:127px;width:30px;height:20px;"></div><svg class="a" style="left:886px;top:130px" width="14" height="14" viewBox="0 0 14 14"><rect x=".5" y=".8" width="13" height="4.4" rx="1.6" fill="#5c5c5c" stroke="#d8d8d8" stroke-width=".9"/><rect x="8.4" y="1.3" width="4.6" height="3.4" rx="1.2" fill="#f0f0f0"/><rect x=".5" y="7.6" width="13" height="5" rx="1.6" fill="#fff" stroke="#1c1c1c" stroke-width=".9"/><rect x="3.6" y="8.6" width="6.8" height="3" fill="#cfcfcf"/><path d="M3 8.8V11.4L1.4 10.1ZM11 8.8V11.4L12.6 10.1Z" fill="#1c1c1c"/></svg><svg class="a" style="left:901px;top:131px" width="7" height="14" viewBox="0 0 7 14"><g transform="translate(0.3,0.1)"><path d="M3 0L6 4.8H0Z" fill="#b4b4b4"/><path d="M0 7.3H6L3 12.2Z" fill="#b4b4b4"/></g></svg>
<div class="w dk" style="left:918px;top:127px;width:220px;height:20px;"><div class="sel" style="left:0;top:0;width:21px;height:18px"></div><div class="dv" style="left:20.9px"></div><div class="dv" style="left:42.8px"></div><div class="dv" style="left:64.7px"></div><div class="dv" style="left:86.6px"></div><div class="dv" style="left:108.5px"></div><div class="dv" style="left:130.4px"></div><div class="dv" style="left:152.3px"></div><div class="dv" style="left:174.2px"></div><div class="dv" style="left:196.1px"></div></div>
<svg class="a" style="left:921px;top:130px" width="16" height="15" viewBox="0 0 16 15"><g transform="translate(0.2,0)"><defs><radialGradient id="lens" cx="40%" cy="35%" r="70%"><stop offset="0" stop-color="#d8a0a0"/><stop offset=".5" stop-color="#4a3050"/><stop offset="1" stop-color="#141824"/></radialGradient></defs><path d="M2 1.6H5.4V3" fill="#e8e8e8" stroke="#161616" stroke-width=".8"/><rect x=".6" y="3" width="13.2" height="9.6" rx=".9" fill="#f2f2f2" stroke="#161616" stroke-width="1"/><rect x="1.4" y="5.2" width="11.6" height="5" fill="#3c3c3c"/><rect x="1.4" y="10.2" width="11.6" height="1.6" fill="#d8d8d8"/><rect x="2" y="3.8" width="1.3" height="1.2" fill="#e01818"/><rect x="9.8" y="3.8" width="3" height="1.1" fill="#3a4a78"/><circle cx="8.4" cy="8.4" r="3.3" fill="url(#lens)" stroke="#e8e8e8" stroke-width=".9"/><circle cx="8.4" cy="8.4" r="3.9" fill="none" stroke="#222" stroke-width=".6"/></g></svg>
<svg class="a" style="left:942px;top:129px" width="17" height="17" viewBox="0 0 17 17"><g transform="translate(0.95,0)"><g opacity=".68"><circle cx="3.4" cy="3.6" r="2.6" fill="rgba(230,225,90,.5)"/><rect x="2.6" y="2.8" width="1.6" height="1.6" fill="#f4f0a0"/><path d="M8.2 2.6Q10.6 1.2 13 2.6V11Q10.6 12.4 8.2 11Z" fill="#5a86c8" stroke="#1c3464" stroke-width=".8"/><ellipse cx="10.6" cy="2.9" rx="2.2" ry=".9" fill="#9cbce8"/><circle cx="6.6" cy="11.6" r="3.3" fill="#b4b4b4" stroke="#2a2a2a" stroke-width=".8"/><circle cx="5.6" cy="10.6" r="1.2" fill="#e4e4e4"/></g></g></svg><svg class="a" style="left:965px;top:129px" width="16" height="16" viewBox="0 0 17.067 17.067"><g transform="translate(0.427,0.533)"><g opacity="0.66"><defs><radialGradient id="wg" cx="40%" cy="35%" r="75%"><stop offset="0" stop-color="#a8d0f4"/><stop offset="1" stop-color="#2c62ac"/></radialGradient></defs><circle cx="8" cy="8" r="6.9" fill="url(#wg)" stroke="#1a2c50" stroke-width=".9"/><path d="M3.2 5.2Q5 3 7.4 3.2L8.2 4.6L6.6 6.2L7.2 8.2L5.4 9.6L4.4 12.2Q2 9 3.2 5.2Z" fill="#58903a"/><path d="M9.6 5.6L12.6 4.6Q14.4 7 13.6 10L11.6 12.4L10.2 10L11 7.8Z" fill="#58903a"/><path d="M4 4.4Q6 2.4 9 2.6" stroke="rgba(255,255,255,.7)" stroke-width=".9" fill="none"/></g></g></svg><svg class="a" style="left:987px;top:130px" width="15" height="15" viewBox="0 0 17.143 17.143"><g transform="translate(0.971,0.0)"><g opacity=".72"><path d="M8 1L14.4 3.8V11.8L8 15L1.6 11.8V3.8Z" fill="#c8925a" stroke="#e8c8a0" stroke-width=".9" stroke-linejoin="round"/><path d="M8 7V15L1.6 11.8V3.8Z" fill="#d8a870"/><path d="M8 7L14.4 3.8V11.8L8 15Z" fill="#a87038"/><path d="M1.6 3.8L8 7L14.4 3.8M8 7V15" stroke="#f0dcc0" stroke-width=".8" fill="none"/></g></g></svg><svg class="a" style="left:1008px;top:129px" width="18" height="17" viewBox="0 0 18 17"><g transform="translate(0.3,0)"><g opacity=".7" fill="none"><path d="M7.4 10.2L4.6 12.6Q2.6 13.6 1.6 11.6Q1 10 2.4 8.8L5.6 6.2Q7.4 5.2 8.6 6.6" stroke="#2a2a2a" stroke-width="3"/><path d="M9.4 5.8L12.2 3.4Q14.2 2.4 15.2 4.4Q15.8 6 14.4 7.2L11.2 9.8Q9.4 10.8 8.2 9.4" stroke="#2a2a2a" stroke-width="3"/><path d="M7.4 10.2L4.6 12.6Q2.6 13.6 1.6 11.6Q1 10 2.4 8.8L5.6 6.2Q7.4 5.2 8.6 6.6" stroke="#d4d4d4" stroke-width="1.5"/><path d="M9.4 5.8L12.2 3.4Q14.2 2.4 15.2 4.4Q15.8 6 14.4 7.2L11.2 9.8Q9.4 10.8 8.2 9.4" stroke="#d4d4d4" stroke-width="1.5"/></g></g></svg><svg class="a" style="left:1030px;top:129px" width="17" height="17" viewBox="0 0 17 17"><g transform="translate(0.75,0)"><g opacity=".72"><path d="M1.6 13L8.4 6.2Q7.6 3.4 9.8 1.8Q11.4 .8 13 1.4L10.6 3.8L11 5.4L12.6 5.8L15 3.4Q15.6 5.2 14.4 6.8Q12.6 8.6 10.2 8L3.4 14.8Q2.4 15.4 1.6 14.6Q1 13.8 1.6 13Z" fill="#6a96d8" stroke="#1c3464" stroke-width=".9" stroke-linejoin="round"/><path d="M2.4 13.6L9 7" stroke="#b8d0f0" stroke-width=".8"/></g></g></svg><div class="t" style="left:1054.7px;top:127.5px;font-family:'Liberation Serif',serif;font-size:18px;font-weight:bold;line-height:20px;height:20px;color:#bdbdbd;-webkit-text-stroke:0;text-shadow:0 0 1px #222,0 0 1px #222">F</div><svg class="a" style="left:1074px;top:129px" width="17" height="17" viewBox="0 0 17 17"><g transform="translate(0.65,0)"><g opacity=".7"><defs><radialGradient id="mtg" cx="38%" cy="32%" r="75%"><stop offset="0" stop-color="#e8e8e8"/><stop offset="1" stop-color="#5a5a5a"/></radialGradient></defs><circle cx="8" cy="8" r="6.8" fill="url(#mtg)" stroke="#2a2a2a" stroke-width=".8"/><path d="M8 8H14.8A6.8 6.8 0 0 1 8 14.8Z" fill="#b85a3c" opacity=".75"/><path d="M8 8V1.2A6.8 6.8 0 0 1 14.8 8Z" fill="#6a5a58" opacity=".6"/></g></g></svg><svg class="a" style="left:1097px;top:130px" width="15" height="15" viewBox="0 0 15 15"><g transform="translate(0.6,0)"><g opacity=".72"><rect x=".5" y=".5" width="13" height="13" fill="#d2d2d2" stroke="#3a3a3a" stroke-width=".8"/><rect x="1.2" y="4.2" width="2.8" height="2.8" fill="#8e2416"/><rect x="1.2" y="10.2" width="2.8" height="2.8" fill="#8e2416"/><rect x="4.2" y="1.2" width="2.8" height="2.8" fill="#8e2416"/><rect x="4.2" y="7.2" width="2.8" height="2.8" fill="#8e2416"/><rect x="7.2" y="4.2" width="2.8" height="2.8" fill="#8e2416"/><rect x="7.2" y="10.2" width="2.8" height="2.8" fill="#8e2416"/><rect x="10.2" y="1.2" width="2.8" height="2.8" fill="#8e2416"/><rect x="10.2" y="7.2" width="2.8" height="2.8" fill="#8e2416"/></g></g></svg><svg class="a" style="left:1118px;top:129px" width="18" height="17" viewBox="0 0 18 17"><g transform="translate(0.05,0)"><g opacity=".75"><path d="M1 7.6L3.6 6.6L6.6 11.2L11.6 4L13.2 5L7.4 15H6Z" fill="#3a62a8" stroke="#1c2c50" stroke-width=".7" stroke-linejoin="round"/><defs><radialGradient id="phg" cx="38%" cy="32%" r="75%"><stop offset="0" stop-color="#f0f0f0"/><stop offset="1" stop-color="#7a7a7a"/></radialGradient></defs><circle cx="13" cy="3.6" r="3.2" fill="url(#phg)" stroke="#3a3a3a" stroke-width=".6"/></g></g></svg>
<svg class="a" style="left:1267px;top:124.5px;overflow:hidden" width="12" height="12" viewBox="0 0 12 12"><path d="M1.5 0L12 10.5M5.5 0L12 6.5M9.5 0L12 2.5" stroke="#9a9a9a" stroke-width="1.2"/><path d="M3.2 0L12 8.8M7.2 0L12 4.8" stroke="#3a3a3a" stroke-width="1.2"/></svg>
<svg class="a" style="left:883px;top:160px" width="16" height="16" viewBox="0 0 16 16"><path d="M1 15L6.4 9.6" stroke="#1c1c1c" stroke-width="2.2" stroke-linecap="round"/><path d="M1.2 14.8L6.4 9.6" stroke="#e8e8e8" stroke-width="1" stroke-linecap="round"/><path d="M3.4 7.2L8.8 12.6L10 10.4L14.8 6.2L15.4 4.4L11.6 .6L9.8 1.2L5.6 6Z" fill="#f0f0f0" stroke="#1c1c1c" stroke-width="1" stroke-linejoin="round"/><path d="M6.2 6.4L9.6 9.8M10.2 1.6L14.4 5.8" stroke="#8a8a8a" stroke-width=".9"/></svg><svg class="a" style="left:905px;top:160px" width="16" height="16" viewBox="0 0 16 16"><g transform="translate(0.5,0)"><defs><radialGradient id="sng" cx="35%" cy="30%" r="80%"><stop offset="0" stop-color="#fff"/><stop offset="1" stop-color="#8a8a8a"/></radialGradient><linearGradient id="cyg" x1="0" y1="0" x2="1" y2="0"><stop offset="0" stop-color="#9fc0f0"/><stop offset="1" stop-color="#2d5fb8"/></linearGradient><radialGradient id="lg" cx="50%" cy="50%" r="50%"><stop offset="0" stop-color="#fffde0"/><stop offset=".45" stop-color="#e8e06a"/><stop offset="1" stop-color="rgba(200,190,40,0)"/></radialGradient></defs><path d="M7.6 1.6Q10.2 .2 12.6 1.6V10.6Q10.2 12 7.6 10.6Z" fill="url(#cyg)" stroke="#14306e" stroke-width=".9"/><ellipse cx="10.1" cy="1.9" rx="2.3" ry=".9" fill="#c4daf8"/><circle cx="5.9" cy="11" r="3.3" fill="url(#sng)" stroke="#1e1e1e" stroke-width=".9"/><circle cx="2.8" cy="2.9" r="2.7" fill="url(#lg)"/><rect x="2" y="2.1" width="1.7" height="1.7" fill="#fffff0"/></g></svg><div class="t " style="left:922.3px;top:161.8px;">Scene</div>
<div class="a" style="left:878px;top:184.5px;width:381px;height:1px;background:#505050;"></div><div class="a" style="left:878px;top:185.5px;width:381px;height:1px;background:#888;"></div>
<svg class="a" style="left:886px;top:194px" width="10" height="9" viewBox="0 0 10 9"><g transform="translate(0,0.3)"><path d="M0 0H8.4L4.2 7.8Z" fill="#1a1a1a"/></g></svg><div class="t " style="left:897.8px;top:191.8px;letter-spacing:0.17px;font-size:12px;line-height:15px;height:15px">Render</div><svg class="a" style="left:1238.5px;top:187.8px;overflow:hidden" width="17" height="17" viewBox="0 0 17 17"><path d="M0 0L17 17M5.5 0L17 11.5M11 0L17 6" stroke="#8c8c8c" stroke-width="1"/><path d="M0 1.2L16 17.2M5.5 1.2L17 12.7M11 1.2L17 7.2" stroke="#5c5c5c" stroke-width=".8"/></svg>
<div class="w bt" style="left:881px;top:218px;width:375px;height:20px;"><div class="dv" style="left:123px"></div><div class="dv" style="left:248.5px"></div></div>
<svg class="a" style="left:885px;top:220px" width="16" height="15" viewBox="0 0 16 15"><g transform="translate(0.5,0.5)"><defs><radialGradient id="lens" cx="40%" cy="35%" r="70%"><stop offset="0" stop-color="#d8a0a0"/><stop offset=".5" stop-color="#4a3050"/><stop offset="1" stop-color="#141824"/></radialGradient></defs><path d="M2 1.6H5.4V3" fill="#e8e8e8" stroke="#161616" stroke-width=".8"/><rect x=".6" y="3" width="13.2" height="9.6" rx=".9" fill="#f2f2f2" stroke="#161616" stroke-width="1"/><rect x="1.4" y="5.2" width="11.6" height="5" fill="#3c3c3c"/><rect x="1.4" y="10.2" width="11.6" height="1.6" fill="#d8d8d8"/><rect x="2" y="3.8" width="1.3" height="1.2" fill="#e01818"/><rect x="9.8" y="3.8" width="3" height="1.1" fill="#3a4a78"/><circle cx="8.4" cy="8.4" r="3.3" fill="url(#lens)" stroke="#e8e8e8" stroke-width=".9"/><circle cx="8.4" cy="8.4" r="3.9" fill="none" stroke="#222" stroke-width=".6"/><path d="M12.6 -1.4V4.6M9.6 1.6H15.6" stroke="#e8c020" stroke-width="2.6"/><path d="M12.6 -.6V3.8M10.4 1.6H14.8" stroke="#fff" stroke-width="1.2"/></g></svg><div class="t " style="left:881px;top:221px;width:142px;text-align:center;padding-left:0">Render</div>
<svg class="a" style="left:1010px;top:219px" width="17" height="17" viewBox="0 0 17 17"><g transform="translate(0,0.5)"><path d="M.8 6.6L13.6 1.6L14.4 3.8L1.6 8.8Z" fill="#fff" stroke="#161616" stroke-width=".9"/><path d="M3.4 5.6L5 8M6.6 4.4L8.2 6.8M9.8 3.1L11.4 5.5" stroke="#161616" stroke-width="1.3"/><path d="M.6 6.8L2.6 6V8.4Z" fill="#2c6ad0" stroke="#16306a" stroke-width=".6"/><rect x="1.6" y="8.8" width="12.6" height="6.4" fill="#4a4a4a" stroke="#161616" stroke-width=".9"/><path d="M1.6 10.6H14.2" stroke="#e8e8e8" stroke-width="1"/><path d="M7 13H12.4M9.8 11.6V14.4" stroke="#8a8a8a" stroke-width=".7"/></g></svg><div class="t " style="left:1005px;top:221px;width:141px;text-align:center">Animation</div>
<svg class="a" style="left:1135px;top:220px" width="13" height="16" viewBox="0 0 13 16"><path d="M1 1.2V14.8L12 8Z" fill="#fff" stroke="#161616" stroke-width="1.1" stroke-linejoin="round"/></svg><div class="t " style="left:1131px;top:221px;width:139px;text-align:center">Play</div>
<div class="t " style="left:886.5px;top:246.60000000000002px;">Display:</div>
<div class="w dk" style="left:1010px;top:243px;width:246px;height:20px;"></div><div class="t tw" style="left:1015px;top:247.0px;">Image Editor</div><svg class="a" style="left:1242px;top:247px" width="7" height="14" viewBox="0 0 7 14"><g transform="translate(0.5,0.1)"><path d="M3 0L6 4.8H0Z" fill="#b4b4b4"/><path d="M0 7.3H6L3 12.2Z" fill="#b4b4b4"/></g></svg>
<div class="a" style="left:878px;top:270.0px;width:381px;height:1px;background:#505050;"></div><div class="a" style="left:878px;top:271.0px;width:381px;height:1px;background:#888;"></div>
<svg class="a" style="left:885px;top:279px" width="9" height="10" viewBox="0 0 9 10"><g transform="translate(0.6,0)"><path d="M0 0V8.6L7.4 4.3Z" fill="#1a1a1a"/></g></svg><div class="t " style="left:897.8px;top:277px;letter-spacing:0.17px;font-size:12px;line-height:15px;height:15px">Layers</div><svg class="a" style="left:1238.5px;top:273px;overflow:hidden" width="17" height="17" viewBox="0 0 17 17"><path d="M0 0L17 17M5.5 0L17 11.5M11 0L17 6" stroke="#8c8c8c" stroke-width="1"/><path d="M0 1.2L16 17.2M5.5 1.2L17 12.7M11 1.2L17 7.2" stroke="#5c5c5c" stroke-width=".8"/></svg>
<div class="a" style="left:878px;top:294.0px;width:381px;height:1px;background:#505050;"></div><div class="a" style="left:878px;top:295.0px;width:381px;height:1px;background:#888;"></div>
<svg class="a" style="left:886px;top:303px" width="10" height="9" viewBox="0 0 10 9"><g transform="translate(0,0.5)"><path d="M0 0H8.4L4.2 7.8Z" fill="#1a1a1a"/></g></svg><div class="t " style="left:897.8px;top:301px;letter-spacing:0.27px;font-size:12px;line-height:15px;height:15px">Dimensions</div><svg class="a" style="left:1238.5px;top:297px;overflow:hidden" width="17" height="17" viewBox="0 0 17 17"><path d="M0 0L17 17M5.5 0L17 11.5M11 0L17 6" stroke="#8c8c8c" stroke-width="1"/><path d="M0 1.2L16 17.2M5.5 1.2L17 12.7M11 1.2L17 7.2" stroke="#5c5c5c" stroke-width=".8"/></svg>
<div class="w dk" style="left:881px;top:327px;width:375px;height:20px;"><div class="bt" style="left:334px;top:0;width:20px;height:18px"></div><div class="bt" style="left:354.5px;top:0;width:20px;height:18px"></div><div class="dv" style="left:333.5px"></div><div class="dv" style="left:353.8px"></div></div>
<div class="t tw" style="left:886px;top:331px;">Render Presets</div><svg class="a" style="left:1202px;top:331px" width="7" height="14" viewBox="0 0 7 14"><g transform="translate(0.5,0.1)"><path d="M3 0L6 4.8H0Z" fill="#b4b4b4"/><path d="M0 7.3H6L3 12.2Z" fill="#b4b4b4"/></g></svg><svg class="a" style="left:1218px;top:330px" width="14" height="14" viewBox="0 0 14 14"><g transform="translate(0.8,0.5)"><path d="M6.5 1V12M1 6.5H12" stroke="#1a1a1a" stroke-width="3.6" stroke-linecap="butt"/><path d="M6.5 1.8V11.2M1.8 6.5H11.2" stroke="#fff" stroke-width="1.9"/></g></svg><svg class="a" style="left:1239px;top:334px" width="13" height="6" viewBox="0 0 13 6"><path d="M1 3H12" stroke="#1a1a1a" stroke-width="3.6"/><path d="M1.8 3H11.2" stroke="#fff" stroke-width="1.9"/></svg>
<div class="t " style="left:886.5px;top:356px;">Resolution:</div><div class="t " style="left:1077px;top:356px;">Frame Range:</div>
<div class="w " style="left:881px;top:372px;width:183px;height:59px;border-radius:10px;background:#1c1c1c"><div style="left:0;right:0;top:0px;height:18px;background:linear-gradient(#a0a0a0,#b6b6b6)"></div><div style="left:0;right:0;top:19px;height:19px;background:linear-gradient(#a0a0a0,#b6b6b6)"></div><div style="left:0;right:0;top:39px;height:18px;background:linear-gradient(#a0a0a0,#b6b6b6)"></div><div style="left:0;width:93px;top:39px;height:18px;background:linear-gradient(#8a8a8a,#787878)"></div></div><div class="t " style="left:881px;top:376.0px;width:183px;text-align:center">X: <span class="d">1920</span></div><svg class="a" style="left:889px;top:378px" width="6" height="7" viewBox="0 0 6 7"><g transform="translate(0,0.5)"><path d="M4 0V6L0 3Z" fill="#6a6a6a"/></g></svg><svg class="a" style="left:1052px;top:378px" width="6" height="7" viewBox="0 0 6 7"><g transform="translate(0,0.5)"><path d="M0 0V6L4 3Z" fill="#6a6a6a"/></g></svg><div class="t " style="left:881px;top:396.0px;width:183px;text-align:center">Y: <span class="d">1080</span></div><svg class="a" style="left:889px;top:398px" width="6" height="7" viewBox="0 0 6 7"><g transform="translate(0,0.5)"><path d="M4 0V6L0 3Z" fill="#6a6a6a"/></g></svg><svg class="a" style="left:1052px;top:398px" width="6" height="7" viewBox="0 0 6 7"><g transform="translate(0,0.5)"><path d="M0 0V6L4 3Z" fill="#6a6a6a"/></g></svg><div class="t " style="left:881px;top:415.5px;width:183px;text-align:center"><span class="d">50</span>%</div>
<div class="w " style="left:1072px;top:372px;width:184px;height:59px;border-radius:10px;background:#1c1c1c"><div style="left:0;right:0;top:0px;height:18px;background:linear-gradient(#a0a0a0,#b6b6b6)"></div><div style="left:0;right:0;top:19px;height:19px;background:linear-gradient(#a0a0a0,#b6b6b6)"></div><div style="left:0;right:0;top:39px;height:18px;background:linear-gradient(#a0a0a0,#b6b6b6)"></div></div><div class="t " style="left:1072px;top:376.0px;width:184px;text-align:center">Start Frame: <span class="d">1</span></div><svg class="a" style="left:1080px;top:378px" width="6" height="7" viewBox="0 0 6 7"><g transform="translate(0,0.5)"><path d="M4 0V6L0 3Z" fill="#6a6a6a"/></g></svg><svg class="a" style="left:1244px;top:378px" width="6" height="7" viewBox="0 0 6 7"><g transform="translate(0,0.5)"><path d="M0 0V6L4 3Z" fill="#6a6a6a"/></g></svg><div class="t " style="left:1072px;top:396.0px;width:184px;text-align:center">End Frame: <span class="d">250</span></div><svg class="a" style="left:1080px;top:398px" width="6" height="7" viewBox="0 0 6 7"><g transform="translate(0,0.5)"><path d="M4 0V6L0 3Z" fill="#6a6a6a"/></g></svg><svg class="a" style="left:1244px;top:398px" width="6" height="7" viewBox="0 0 6 7"><g transform="translate(0,0.5)"><path d="M0 0V6L4 3Z" fill="#6a6a6a"/></g></svg><div class="t " style="left:1072px;top:416.0px;width:184px;text-align:center">Frame Step: <span class="d">1</span></div><svg class="a" style="left:1080px;top:418px" width="6" height="7" viewBox="0 0 6 7"><g transform="translate(0,0.5)"><path d="M4 0V6L0 3Z" fill="#6a6a6a"/></g></svg><svg class="a" style="left:1244px;top:418px" width="6" height="7" viewBox="0 0 6 7"><g transform="translate(0,0.5)"><path d="M0 0V6L4 3Z" fill="#6a6a6a"/></g></svg>
<div class="t " style="left:886.5px;top:435.8px;">Aspect Ratio:</div><div class="t " style="left:1077px;top:435.8px;">Frame Rate:</div>
<div class="w " style="left:881px;top:452px;width:183px;height:40px;border-radius:10px;background:#1c1c1c"><div style="left:0;right:0;top:0px;height:18px;background:linear-gradient(#a0a0a0,#b6b6b6)"></div><div style="left:0;right:0;top:19px;height:19px;background:linear-gradient(#a0a0a0,#b6b6b6)"></div></div><div class="t " style="left:881px;top:456.0px;width:183px;text-align:center">X: <span class="d">5</span>.<span class="d">000</span></div><svg class="a" style="left:889px;top:458px" width="6" height="7" viewBox="0 0 6 7"><g transform="translate(0,0.5)"><path d="M4 0V6L0 3Z" fill="#6a6a6a"/></g></svg><svg class="a" style="left:1052px;top:458px" width="6" height="7" viewBox="0 0 6 7"><g transform="translate(0,0.5)"><path d="M0 0V6L4 3Z" fill="#6a6a6a"/></g></svg><div class="t " style="left:881px;top:476.0px;width:183px;text-align:center">Y: <span class="d">5</span>.<span class="d">000</span></div><svg class="a" style="left:889px;top:478px" width="6" height="7" viewBox="0 0 6 7"><g transform="translate(0,0.5)"><path d="M4 0V6L0 3Z" fill="#6a6a6a"/></g></svg><svg class="a" style="left:1052px;top:478px" width="6" height="7" viewBox="0 0 6 7"><g transform="translate(0,0.5)"><path d="M0 0V6L4 3Z" fill="#6a6a6a"/></g></svg>
<div class="w dk" style="left:1072px;top:452px;width:184px;height:20px;"></div><div class="t tw" style="left:1077px;top:456.0px;"><span class="d">24</span> fps</div><svg class="a" style="left:1242px;top:456px" width="7" height="14" viewBox="0 0 7 14"><g transform="translate(0.5,0.1)"><path d="M3 0L6 4.8H0Z" fill="#b4b4b4"/><path d="M0 7.3H6L3 12.2Z" fill="#b4b4b4"/></g></svg>
<div class="t " style="left:1077px;top:475.7px;">Time Remapping:</div>
<div class="w nm" style="left:1072px;top:492px;width:184px;height:20px;"><div class="dv" style="left:91px"></div></div><div class="t " style="left:1072px;top:496.0px;width:92px;text-align:center">Old: <span class="d">100</span></div><svg class="a" style="left:1080px;top:498px" width="6" height="7" viewBox="0 0 6 7"><g transform="translate(0,0.5)"><path d="M4 0V6L0 3Z" fill="#6a6a6a"/></g></svg><svg class="a" style="left:1152px;top:498px" width="6" height="7" viewBox="0 0 6 7"><g transform="translate(0,0.5)"><path d="M0 0V6L4 3Z" fill="#6a6a6a"/></g></svg><div class="t " style="left:1164px;top:496.0px;width:92px;text-align:center">New: <span class="d">100</span></div><svg class="a" style="left:1172px;top:498px" width="6" height="7" viewBox="0 0 6 7"><g transform="translate(0,0.5)"><path d="M4 0V6L0 3Z" fill="#6a6a6a"/></g></svg><svg class="a" style="left:1244px;top:498px" width="6" height="7" viewBox="0 0 6 7"><g transform="translate(0,0.5)"><path d="M0 0V6L4 3Z" fill="#6a6a6a"/></g></svg>
<div class="w dk" style="left:884.5px;top:497px;width:14px;height:14px;border-radius:3px"></div><div class="t " style="left:903.2px;top:497.2px;">Border</div>
<div class="w dk" style="left:979.5px;top:497px;width:14px;height:14px;border-radius:3px;opacity:.45"></div><div class="t " style="left:998.2px;top:497.2px;color:#4c4c4c">Crop</div>
<div class="a" style="left:878px;top:520.5px;width:381px;height:1px;background:#505050;"></div><div class="a" style="left:878px;top:521.5px;width:381px;height:1px;background:#888;"></div>
<svg class="a" style="left:886px;top:530px" width="10" height="9" viewBox="0 0 10 9"><g transform="translate(0,0.2)"><path d="M0 0H8.4L4.2 7.8Z" fill="#1a1a1a"/></g></svg><div class="w dk" style="left:898px;top:527.7px;width:14px;height:14px;border-radius:3px"></div><svg class="a" style="left:899px;top:527px" width="13" height="13" viewBox="0 0 13 13"><g transform="translate(0.5,0.2)"><path d="M2.2 6.2L5 9.6L10.4 1.8" stroke="#fff" stroke-width="1.9" fill="none" stroke-linecap="round" stroke-linejoin="round"/></g></svg><div class="t " style="left:918.3px;top:527.7px;letter-spacing:0.27px;font-size:12px;line-height:15px;height:15px">Anti-Aliasing</div><svg class="a" style="left:1238.5px;top:523.7px;overflow:hidden" width="17" height="17" viewBox="0 0 17 17"><path d="M0 0L17 17M5.5 0L17 11.5M11 0L17 6" stroke="#8c8c8c" stroke-width="1"/><path d="M0 1.2L16 17.2M5.5 1.2L17 12.7M11 1.2L17 7.2" stroke="#5c5c5c" stroke-width=".8"/></svg>
<div class="w dk" style="left:881px;top:554px;width:183px;height:20px;"><div class="sel" style="left:44.5px;top:0;width:44px;height:18px"></div><div class="dv" style="left:43.5px"></div><div class="dv" style="left:88.5px"></div><div class="dv" style="left:133.5px"></div></div>
<div class="t tw" style="left:881.0px;top:558px;width:45px;text-align:center"><span class="d">5</span></div>
<div class="t tw" style="left:926.6px;top:558px;width:45px;text-align:center"><span class="d">8</span></div>
<div class="t tw" style="left:972.2px;top:558px;width:45px;text-align:center"><span class="d">11</span></div>
<div class="t tw" style="left:1017.8px;top:558px;width:45px;text-align:center"><span class="d">16</span></div>
<div class="w dk" style="left:1072px;top:554px;width:184px;height:20px;"></div><div class="t tw" style="left:1077px;top:558.0px;">Mitchell-Netravali</div><svg class="a" style="left:1242px;top:558px" width="7" height="14" viewBox="0 0 7 14"><g transform="translate(0.5,0.1)"><path d="M3 0L6 4.8H0Z" fill="#b4b4b4"/><path d="M0 7.3H6L3 12.2Z" fill="#b4b4b4"/></g></svg>
<div class="w dk" style="left:884.5px;top:579.5px;width:14px;height:14px;border-radius:3px"></div><div class="t " style="left:903.2px;top:580px;">Full Sample</div>
<div class="w nm" style="left:1072px;top:576.5px;width:184px;height:19.5px;"></div><div class="t " style="left:1072px;top:580.25px;width:184px;text-align:center">Size: <span class="d">1</span>.<span class="d">500</span></div><svg class="a" style="left:1080px;top:582px" width="6" height="7" viewBox="0 0 6 7"><g transform="translate(0,0.75)"><path d="M4 0V6L0 3Z" fill="#6a6a6a"/></g></svg><svg class="a" style="left:1244px;top:582px" width="6" height="7" viewBox="0 0 6 7"><g transform="translate(0,0.75)"><path d="M0 0V6L4 3Z" fill="#6a6a6a"/></g></svg>
<div class="a" style="left:878px;top:602.0px;width:381px;height:1px;background:#505050;"></div><div class="a" style="left:878px;top:603.0px;width:381px;height:1px;background:#888;"></div>
<svg class="a" style="left:885px;top:611px" width="9" height="10" viewBox="0 0 9 10"><g transform="translate(0.6,0.8)"><path d="M0 0V8.6L7.4 4.3Z" fill="#1a1a1a"/></g></svg><div class="w dk" style="left:898px;top:609.8px;width:14px;height:14px;border-radius:3px"></div><div class="t " style="left:918.3px;top:609.8px;letter-spacing:0.28px;font-size:12px;line-height:15px;height:15px">Sampled Motion Blur</div><svg class="a" style="left:1238.5px;top:605.8px;overflow:hidden" width="17" height="17" viewBox="0 0 17 17"><path d="M0 0L17 17M5.5 0L17 11.5M11 0L17 6" stroke="#8c8c8c" stroke-width="1"/><path d="M0 1.2L16 17.2M5.5 1.2L17 12.7M11 1.2L17 7.2" stroke="#5c5c5c" stroke-width=".8"/></svg>
<div class="a" style="left:878px;top:626.2px;width:381px;height:1px;background:#505050;"></div><div class="a" style="left:878px;top:627.2px;width:381px;height:1px;background:#888;"></div>
<svg class="a" style="left:885px;top:636px" width="9" height="10" viewBox="0 0 9 10"><g transform="translate(0.6,0)"><path d="M0 0V8.6L7.4 4.3Z" fill="#1a1a1a"/></g></svg><div class="t " style="left:897.8px;top:634px;letter-spacing:0.21px;font-size:12px;line-height:15px;height:15px">Shading</div><svg class="a" style="left:1238.5px;top:630px;overflow:hidden" width="17" height="17" viewBox="0 0 17 17"><path d="M0 0L17 17M5.5 0L17 11.5M11 0L17 6" stroke="#8c8c8c" stroke-width="1"/><path d="M0 1.2L16 17.2M5.5 1.2L17 12.7M11 1.2L17 7.2" stroke="#5c5c5c" stroke-width=".8"/></svg>
<div class="a" style="left:878px;top:650.5px;width:381px;height:1px;background:#505050;"></div><div class="a" style="left:878px;top:651.5px;width:381px;height:1px;background:#888;"></div>
<svg class="a" style="left:885px;top:660px" width="9" height="10" viewBox="0 0 9 10"><g transform="translate(0.6,0.2)"><path d="M0 0V8.6L7.4 4.3Z" fill="#1a1a1a"/></g></svg><div class="t " style="left:897.8px;top:658.2px;letter-spacing:0.26px;font-size:12px;line-height:15px;height:15px">Performance</div><svg class="a" style="left:1238.5px;top:654.2px;overflow:hidden" width="17" height="17" viewBox="0 0 17 17"><path d="M0 0L17 17M5.5 0L17 11.5M11 0L17 6" stroke="#8c8c8c" stroke-width="1"/><path d="M0 1.2L16 17.2M5.5 1.2L17 12.7M11 1.2L17 7.2" stroke="#5c5c5c" stroke-width=".8"/></svg>
<div class="a" style="left:878px;top:674.5px;width:381px;height:1px;background:#505050;"></div><div class="a" style="left:878px;top:675.5px;width:381px;height:1px;background:#888;"></div>
<svg class="a" style="left:885px;top:684px" width="9" height="10" viewBox="0 0 9 10"><g transform="translate(0.6,0)"><path d="M0 0V8.6L7.4 4.3Z" fill="#1a1a1a"/></g></svg><div class="t " style="left:897.8px;top:682px;letter-spacing:0.06px;font-size:12px;line-height:15px;height:15px">Post Processing</div><svg class="a" style="left:1238.5px;top:678px;overflow:hidden" width="17" height="17" viewBox="0 0 17 17"><path d="M0 0L17 17M5.5 0L17 11.5M11 0L17 6" stroke="#8c8c8c" stroke-width="1"/><path d="M0 1.2L16 17.2M5.5 1.2L17 12.7M11 1.2L17 7.2" stroke="#5c5c5c" stroke-width=".8"/></svg>
<div class="a" style="left:1264px;top:155px;width:13px;height:544px;box-sizing:border-box;border-radius:6.5px;border:1px solid #4e4e4e;background:linear-gradient(90deg,#5a5a5a,#646464)"></div>
<div class="a" style="left:1264px;top:155px;width:13px;height:399.5px;box-sizing:border-box;border-radius:6.5px;border:1px solid #3e3e3e;background:linear-gradient(90deg,#8c8c8c,#6c6c6c)"></div>
<svg class="a" style="left:874px;top:692px" width="12" height="12" viewBox="0 0 12 12"><path d="M0 1.5L10.5 12M0 5.5L6.5 12M0 9.5L2.5 12" stroke="#9a9a9a" stroke-width="1.2"/><path d="M0 3.2L8.8 12M0 7.2L4.8 12" stroke="#3a3a3a" stroke-width="1.2"/></svg>
</div>
</body></html>
